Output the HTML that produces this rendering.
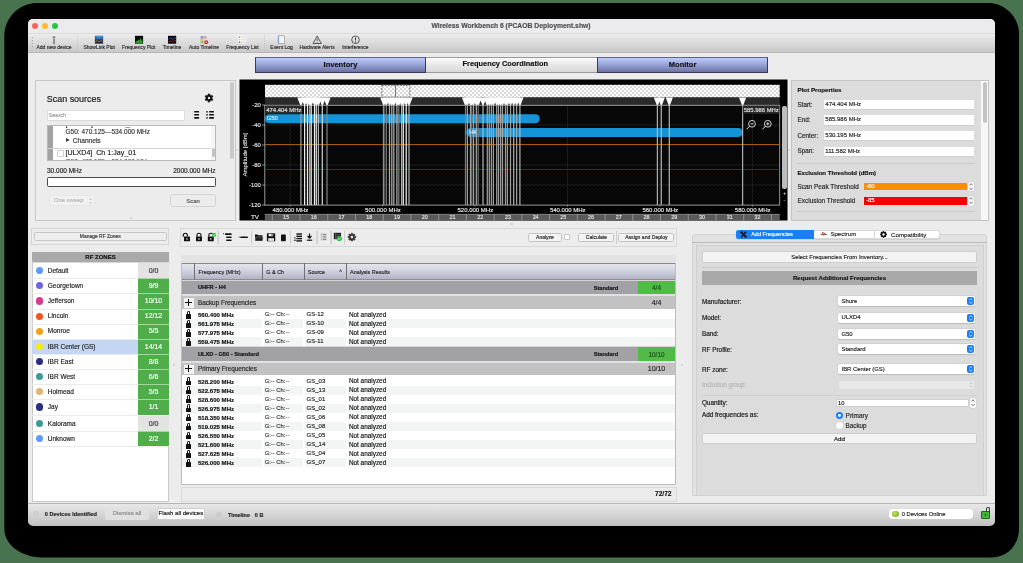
<!DOCTYPE html><html><head><meta charset="utf-8"><style>
html,body{margin:0;padding:0;}
body{width:1023px;height:563px;position:relative;overflow:hidden;background:#48734e;font-family:'Liberation Sans', sans-serif;}
div{box-sizing:border-box;}
.t{position:absolute;white-space:nowrap;-webkit-text-stroke:0.15px currentColor;}
svg{position:absolute;}
#w{position:absolute;left:0;top:0;width:1023px;height:563px;will-change:transform;}
</style></head><body><div id="w">
<svg style="position:absolute;left:0;top:0" width="1023" height="563"><path d="M37,3.0 L988,3.0 C1005,3.0 1019,17 1019,34 L1019,528 C1019,545 1008,557.6 990,557.6 L44,557.6 C22,557.6 4.3,546 4.3,528 L4.3,36 C4.3,18 19,3.0 37,3.0 Z" fill="#000"/></svg>
<div style="position:absolute;left:28px;top:19px;width:967px;height:506px;background:#ececec;border-radius:5px;overflow:hidden;"></div>
<div style="position:absolute;left:28px;top:19px;width:967px;height:15px;background:#ebebed;border-radius:5px 5px 0 0;border-bottom:1px solid #dadada;"></div>
<div style="position:absolute;left:32.15px;top:23.150000000000002px;width:6.3px;height:6.3px;background:#fe5f57;border-radius:50%;"></div>
<div style="position:absolute;left:42.050000000000004px;top:23.150000000000002px;width:6.3px;height:6.3px;background:#febc2e;border-radius:50%;"></div>
<div style="position:absolute;left:52.050000000000004px;top:23.150000000000002px;width:6.3px;height:6.3px;background:#28c840;border-radius:50%;"></div>
<div class="t" style="left:311px;width:400px;text-align:center;top:21.92px;font-size:6.8px;line-height:8.16px;color:#4d4d4d;font-weight:bold;">Wireless Workbench 6 (PCAOB Deployment.shw)</div>
<div style="position:absolute;left:28px;top:34px;width:967px;height:18.6px;background:linear-gradient(#ededed,#dcdcdc 45%,#c8c8c8);border-bottom:1px solid #b8b8b8;"></div>
<div style="position:absolute;left:255px;top:57px;width:171px;height:16px;background:linear-gradient(#bccbfa,#9aa5d8 45%,#6c73a3);border:1px solid #3a3a58;border-top-color:#5c6488;"></div>
<div style="position:absolute;left:426px;top:57px;width:171px;height:16px;background:linear-gradient(#fdfdfd,#e6e6e6 50%,#d8d8d8);border-top:1px solid #999;border-bottom:1px solid #999;"></div>
<div style="position:absolute;left:597px;top:57px;width:171px;height:16px;background:linear-gradient(#bccbfa,#9aa5d8 45%,#6c73a3);border:1px solid #3a3a58;border-top-color:#5c6488;"></div>
<div class="t" style="left:140.5px;width:400px;text-align:center;top:59.90px;font-size:7.5px;line-height:9.00px;color:#111;font-weight:bold;">Inventory</div>
<div class="t" style="left:305.3px;width:400px;text-align:center;top:59.96px;font-size:7.4px;line-height:8.88px;color:#111;font-weight:bold;">Frequency Coordination</div>
<div class="t" style="left:482.6px;width:400px;text-align:center;top:59.90px;font-size:7.5px;line-height:9.00px;color:#111;font-weight:bold;">Monitor</div>
<div style="position:absolute;left:34.5px;top:79.5px;width:201px;height:141px;background:#ececec;border:1px solid #c8c8c8;"></div>
<div class="t" style="left:46.8px;top:93.53px;font-size:8.95px;line-height:10.74px;color:#151515;font-weight:normal;">Scan sources</div>
<div style="position:absolute;left:229.5px;top:81.5px;width:4px;height:77px;background:#c9c9c9;border-radius:2px;"></div>
<div style="position:absolute;left:47px;top:110px;width:138px;height:10.5px;background:#fff;border:1px solid #dcdcdc;border-radius:1px;"></div>
<div class="t" style="left:48.5px;top:111.94px;font-size:5.6px;line-height:6.72px;color:#9a9a9a;font-weight:normal;">Search</div>
<div style="position:absolute;left:47px;top:125px;width:168.5px;height:35.5px;background:#fff;border:1px solid #b9b9b9;overflow:hidden;"><div style="position:absolute;left:-0.5px;top:0;width:5.5px;height:35px;background:#a3a3a3;"></div><div style="position:absolute;left:0px;top:21.8px;width:163px;height:0.8px;background:#d4d4d4;"></div><div style="position:absolute;left:163px;top:0;width:5.5px;height:35px;background:#f6f6f6;"></div><div style="position:absolute;left:164.2px;top:21.5px;width:3px;height:9px;background:#c4c4c4;border-radius:1.5px;"></div><div class="t" style="left:17.50px;top:-5.66px;font-size:7.1px;line-height:8.52px;color:#333;">[UHFR4]&nbsp; Ch 1:IBR_C</div><div class="t" style="left:17.50px;top:1.70px;font-size:6.5px;line-height:7.80px;color:#333;">G50: 470.125&mdash;534.000 MHz</div><div class="t" style="left:24.80px;top:10.64px;font-size:6.6px;line-height:7.92px;color:#333;">Channels</div><svg style="position:absolute;left:18px;top:12.4px" width="5" height="5"><polygon points="0,0 3.8,1.9 0,3.8" fill="#333"/></svg><div style="position:absolute;left:8.5px;top:24px;width:7px;height:7px;background:#fff;border:0.7px solid #d0d0d0;border-radius:1px;"></div><div class="t" style="left:17.50px;top:23.34px;font-size:7.1px;line-height:8.52px;color:#222;">[ULXD4]&nbsp; Ch 1:Jay_01</div><div class="t" style="left:17.50px;top:32.30px;font-size:6.5px;line-height:7.80px;color:#555;">G50: 470.125&mdash;534.000 MHz</div></div>
<div class="t" style="left:47px;top:167.10px;font-size:6.5px;line-height:7.80px;color:#222;font-weight:normal;">30.000 MHz</div>
<div class="t" style="left:-184.5px;width:400px;text-align:right;top:167.10px;font-size:6.5px;line-height:7.80px;color:#222;font-weight:normal;">2000.000 MHz</div>
<div style="position:absolute;left:47.3px;top:177.3px;width:168.3px;height:9.3px;background:#fff;border:1px solid #4a4a4a;border-radius:1.5px;"></div>
<div style="position:absolute;left:49.7px;top:195.7px;width:44.5px;height:9.7px;background:#f1f1f1;border-radius:2px;box-shadow:0 0 0 0.5px #e0e0e0;"></div>
<div class="t" style="left:53.8px;top:197.46px;font-size:5.9px;line-height:7.08px;color:#b8b8b8;font-weight:normal;">One sweep</div>
<svg style="left:87.6px;top:196.5px" width="5" height="8" viewBox="0 0 5 8"><path d="M1.2,3 L2.5,1.6 L3.8,3 M1.2,5 L2.5,6.4 L3.8,5" stroke="#b0b0b0" stroke-width="0.7" fill="none"/></svg>
<div style="position:absolute;left:170.3px;top:194.3px;width:45.4px;height:13.2px;background:#ececec;border:1px solid #d2d2d2;border-radius:2.5px;"></div>
<div class="t" style="left:-7px;width:400px;text-align:center;top:197.50px;font-size:6.0px;line-height:7.20px;color:#555;font-weight:normal;">Scan</div>
<div style="position:absolute;left:129.5px;top:216.8px;width:2px;height:2px;background:#cfcfcf;border-radius:50%;"></div>
<svg style="left:0;top:0" width="1023" height="563" viewBox="0 0 1023 563">
<defs><pattern id="chk" x="265" y="85" width="4" height="4" patternUnits="userSpaceOnUse"><rect width="4" height="4" fill="#fbfbfb"/><path d="M0,0 L4,4 M4,0 L0,4" stroke="#cdcdcd" stroke-width="0.75"/></pattern><pattern id="dchk" width="4" height="4" patternUnits="userSpaceOnUse"><rect width="4" height="4" fill="#030303"/><path d="M0,0 L4,4 M4,0 L0,4" stroke="#101010" stroke-width="0.6"/></pattern></defs>
<rect x="239.5" y="79.5" width="548" height="141" fill="#000"/>
<rect x="264.8" y="105" width="515" height="100" fill="url(#dchk)"/>
<rect x="265" y="84.8" width="514.7" height="12.7" fill="url(#chk)"/>
<rect x="265" y="97.5" width="514.7" height="7.8" fill="#2b2b2b"/>
<line x1="290.16" y1="105" x2="290.16" y2="205" stroke="#262626" stroke-width="0.7"/>
<line x1="382.60" y1="105" x2="382.60" y2="205" stroke="#262626" stroke-width="0.7"/>
<line x1="475.04" y1="105" x2="475.04" y2="205" stroke="#262626" stroke-width="0.7"/>
<line x1="567.48" y1="105" x2="567.48" y2="205" stroke="#262626" stroke-width="0.7"/>
<line x1="659.92" y1="105" x2="659.92" y2="205" stroke="#262626" stroke-width="0.7"/>
<line x1="752.36" y1="105" x2="752.36" y2="205" stroke="#262626" stroke-width="0.7"/>
<line x1="265" y1="125" x2="779.7" y2="125" stroke="#262626" stroke-width="0.7"/>
<line x1="265" y1="145" x2="779.7" y2="145" stroke="#262626" stroke-width="0.7"/>
<line x1="265" y1="165" x2="779.7" y2="165" stroke="#262626" stroke-width="0.7"/>
<line x1="265" y1="185" x2="779.7" y2="185" stroke="#262626" stroke-width="0.7"/>
<polygon points="297.30,97.4 304.50,97.4 301.50,105.3 300.30,105.3" fill="#fff"/>
<polygon points="301.00,97.4 308.20,97.4 305.20,105.3 304.00,105.3" fill="#fff"/>
<polygon points="303.90,97.4 311.10,97.4 308.10,105.3 306.90,105.3" fill="#fff"/>
<polygon points="306.10,97.4 313.30,97.4 310.30,105.3 309.10,105.3" fill="#fff"/>
<polygon points="307.60,97.4 314.80,97.4 311.80,105.3 310.60,105.3" fill="#fff"/>
<polygon points="310.90,97.4 318.10,97.4 315.10,105.3 313.90,105.3" fill="#fff"/>
<polygon points="312.70,97.4 319.90,97.4 316.90,105.3 315.70,105.3" fill="#fff"/>
<polygon points="314.80,97.4 322.00,97.4 319.00,105.3 317.80,105.3" fill="#fff"/>
<polygon points="318.70,97.4 325.90,97.4 322.90,105.3 321.70,105.3" fill="#fff"/>
<polygon points="323.40,97.4 330.60,97.4 327.60,105.3 326.40,105.3" fill="#fff"/>
<polygon points="380.20,97.4 387.40,97.4 384.40,105.3 383.20,105.3" fill="#fff"/>
<polygon points="382.70,97.4 389.90,97.4 386.90,105.3 385.70,105.3" fill="#fff"/>
<polygon points="385.90,97.4 393.10,97.4 390.10,105.3 388.90,105.3" fill="#fff"/>
<polygon points="388.20,97.4 395.40,97.4 392.40,105.3 391.20,105.3" fill="#fff"/>
<polygon points="390.20,97.4 397.40,97.4 394.40,105.3 393.20,105.3" fill="#fff"/>
<polygon points="393.30,97.4 400.50,97.4 397.50,105.3 396.30,105.3" fill="#fff"/>
<polygon points="395.20,97.4 402.40,97.4 399.40,105.3 398.20,105.3" fill="#fff"/>
<polygon points="398.00,97.4 405.20,97.4 402.20,105.3 401.00,105.3" fill="#fff"/>
<polygon points="399.70,97.4 406.90,97.4 403.90,105.3 402.70,105.3" fill="#fff"/>
<polygon points="402.60,97.4 409.80,97.4 406.80,105.3 405.60,105.3" fill="#fff"/>
<polygon points="405.40,97.4 412.60,97.4 409.60,105.3 408.40,105.3" fill="#fff"/>
<polygon points="461.90,97.4 469.10,97.4 466.10,105.3 464.90,105.3" fill="#fff"/>
<polygon points="463.80,97.4 471.00,97.4 468.00,105.3 466.80,105.3" fill="#fff"/>
<polygon points="466.90,97.4 474.10,97.4 471.10,105.3 469.90,105.3" fill="#fff"/>
<polygon points="468.10,97.4 475.30,97.4 472.30,105.3 471.10,105.3" fill="#fff"/>
<polygon points="469.90,97.4 477.10,97.4 474.10,105.3 472.90,105.3" fill="#fff"/>
<polygon points="472.80,97.4 480.00,97.4 477.00,105.3 475.80,105.3" fill="#fff"/>
<polygon points="474.60,97.4 481.80,97.4 478.80,105.3 477.60,105.3" fill="#fff"/>
<polygon points="479.40,97.4 486.60,97.4 483.60,105.3 482.40,105.3" fill="#fff"/>
<polygon points="483.70,97.4 490.90,97.4 487.90,105.3 486.70,105.3" fill="#fff"/>
<polygon points="485.70,97.4 492.90,97.4 489.90,105.3 488.70,105.3" fill="#fff"/>
<polygon points="487.80,97.4 495.00,97.4 492.00,105.3 490.80,105.3" fill="#fff"/>
<polygon points="489.80,97.4 497.00,97.4 494.00,105.3 492.80,105.3" fill="#fff"/>
<polygon points="493.10,97.4 500.30,97.4 497.30,105.3 496.10,105.3" fill="#fff"/>
<polygon points="494.90,97.4 502.10,97.4 499.10,105.3 497.90,105.3" fill="#fff"/>
<polygon points="497.00,97.4 504.20,97.4 501.20,105.3 500.00,105.3" fill="#fff"/>
<polygon points="498.90,97.4 506.10,97.4 503.10,105.3 501.90,105.3" fill="#fff"/>
<polygon points="501.90,97.4 509.10,97.4 506.10,105.3 504.90,105.3" fill="#fff"/>
<polygon points="503.80,97.4 511.00,97.4 508.00,105.3 506.80,105.3" fill="#fff"/>
<polygon points="506.90,97.4 514.10,97.4 511.10,105.3 509.90,105.3" fill="#fff"/>
<polygon points="510.10,97.4 517.30,97.4 514.30,105.3 513.10,105.3" fill="#fff"/>
<polygon points="513.00,97.4 520.20,97.4 517.20,105.3 516.00,105.3" fill="#fff"/>
<polygon points="516.30,97.4 523.50,97.4 520.50,105.3 519.30,105.3" fill="#fff"/>
<polygon points="653.80,97.4 661.00,97.4 658.00,105.3 656.80,105.3" fill="#fff"/>
<polygon points="657.70,97.4 664.90,97.4 661.90,105.3 660.70,105.3" fill="#fff"/>
<polygon points="665.70,97.4 672.90,97.4 669.90,105.3 668.70,105.3" fill="#fff"/>
<polygon points="739.00,97.4 746.20,97.4 743.20,105.3 742.00,105.3" fill="#fff"/>
<rect x="264.8" y="105.3" width="514.9" height="99.8" fill="none" stroke="#a8a8a8" stroke-width="0.9"/>
<rect x="264.8" y="114.3" width="275" height="8.9" rx="4.4" fill="#1494d8"/>
<rect x="466.3" y="128" width="276.3" height="9" rx="4.5" fill="#1494d8"/>
<line x1="265" y1="144.5" x2="779.5" y2="144.5" stroke="#a05c0c" stroke-width="1.1"/>
<line x1="265" y1="169.5" x2="779.5" y2="169.5" stroke="#950606" stroke-width="1.1"/>
<line x1="300.9" y1="105" x2="300.9" y2="205" stroke="#aaa" stroke-width="1.25" opacity="0.92"/>
<line x1="304.6" y1="105" x2="304.6" y2="205" stroke="#fff" stroke-width="1.25" opacity="0.92"/>
<line x1="307.5" y1="105" x2="307.5" y2="205" stroke="#fff" stroke-width="1.25" opacity="0.92"/>
<line x1="309.7" y1="105" x2="309.7" y2="205" stroke="#bbb" stroke-width="1.25" opacity="0.92"/>
<line x1="311.2" y1="105" x2="311.2" y2="205" stroke="#fff" stroke-width="1.25" opacity="0.92"/>
<line x1="314.5" y1="105" x2="314.5" y2="205" stroke="#fff" stroke-width="1.25" opacity="0.92"/>
<line x1="316.3" y1="105" x2="316.3" y2="205" stroke="#eee" stroke-width="1.25" opacity="0.92"/>
<line x1="318.4" y1="105" x2="318.4" y2="205" stroke="#bbb" stroke-width="1.25" opacity="0.92"/>
<line x1="322.3" y1="105" x2="322.3" y2="205" stroke="#ddd" stroke-width="1.25" opacity="0.92"/>
<line x1="327" y1="105" x2="327" y2="205" stroke="#888" stroke-width="1.25" opacity="0.92"/>
<line x1="383.8" y1="105" x2="383.8" y2="205" stroke="#bbb" stroke-width="1.25" opacity="0.92"/>
<line x1="386.3" y1="105" x2="386.3" y2="205" stroke="#888" stroke-width="1.25" opacity="0.92"/>
<line x1="389.5" y1="105" x2="389.5" y2="205" stroke="#bbb" stroke-width="1.25" opacity="0.92"/>
<line x1="391.8" y1="105" x2="391.8" y2="205" stroke="#bbb" stroke-width="1.25" opacity="0.92"/>
<line x1="393.8" y1="105" x2="393.8" y2="205" stroke="#bbb" stroke-width="1.25" opacity="0.92"/>
<line x1="396.9" y1="105" x2="396.9" y2="205" stroke="#bbb" stroke-width="1.25" opacity="0.92"/>
<line x1="398.8" y1="105" x2="398.8" y2="205" stroke="#888" stroke-width="1.25" opacity="0.92"/>
<line x1="401.6" y1="105" x2="401.6" y2="205" stroke="#bbb" stroke-width="1.25" opacity="0.92"/>
<line x1="403.3" y1="105" x2="403.3" y2="205" stroke="#fff" stroke-width="1.25" opacity="0.92"/>
<line x1="406.2" y1="105" x2="406.2" y2="205" stroke="#fff" stroke-width="1.25" opacity="0.92"/>
<line x1="409" y1="105" x2="409" y2="205" stroke="#bbb" stroke-width="1.25" opacity="0.92"/>
<line x1="465.5" y1="105" x2="465.5" y2="205" stroke="#888" stroke-width="1.25" opacity="0.92"/>
<line x1="467.4" y1="105" x2="467.4" y2="205" stroke="#aaa" stroke-width="1.25" opacity="0.92"/>
<line x1="470.5" y1="105" x2="470.5" y2="205" stroke="#aaa" stroke-width="1.25" opacity="0.92"/>
<line x1="471.7" y1="105" x2="471.7" y2="205" stroke="#777" stroke-width="1.25" opacity="0.92"/>
<line x1="473.5" y1="105" x2="473.5" y2="205" stroke="#aaa" stroke-width="1.25" opacity="0.92"/>
<line x1="476.4" y1="105" x2="476.4" y2="205" stroke="#aaa" stroke-width="1.25" opacity="0.92"/>
<line x1="478.2" y1="105" x2="478.2" y2="205" stroke="#777" stroke-width="1.25" opacity="0.92"/>
<line x1="483" y1="105" x2="483" y2="205" stroke="#bbb" stroke-width="1.25" opacity="0.92"/>
<line x1="487.3" y1="105" x2="487.3" y2="205" stroke="#aaa" stroke-width="1.25" opacity="0.92"/>
<line x1="489.3" y1="105" x2="489.3" y2="205" stroke="#aaa" stroke-width="1.25" opacity="0.92"/>
<line x1="491.4" y1="105" x2="491.4" y2="205" stroke="#aaa" stroke-width="1.25" opacity="0.92"/>
<line x1="493.4" y1="105" x2="493.4" y2="205" stroke="#aaa" stroke-width="1.25" opacity="0.92"/>
<line x1="496.7" y1="105" x2="496.7" y2="205" stroke="#aaa" stroke-width="1.25" opacity="0.92"/>
<line x1="498.5" y1="105" x2="498.5" y2="205" stroke="#aaa" stroke-width="1.25" opacity="0.92"/>
<line x1="500.6" y1="105" x2="500.6" y2="205" stroke="#aaa" stroke-width="1.25" opacity="0.92"/>
<line x1="502.5" y1="105" x2="502.5" y2="205" stroke="#aaa" stroke-width="1.25" opacity="0.92"/>
<line x1="505.5" y1="105" x2="505.5" y2="205" stroke="#aaa" stroke-width="1.25" opacity="0.92"/>
<line x1="507.4" y1="105" x2="507.4" y2="205" stroke="#aaa" stroke-width="1.25" opacity="0.92"/>
<line x1="510.5" y1="105" x2="510.5" y2="205" stroke="#aaa" stroke-width="1.25" opacity="0.92"/>
<line x1="513.7" y1="105" x2="513.7" y2="205" stroke="#bbb" stroke-width="1.25" opacity="0.92"/>
<line x1="516.6" y1="105" x2="516.6" y2="205" stroke="#aaa" stroke-width="1.25" opacity="0.92"/>
<line x1="519.9" y1="105" x2="519.9" y2="205" stroke="#bbb" stroke-width="1.25" opacity="0.92"/>
<line x1="657.4" y1="105" x2="657.4" y2="205" stroke="#bbb" stroke-width="1.25" opacity="0.92"/>
<line x1="661.3" y1="105" x2="661.3" y2="205" stroke="#bbb" stroke-width="1.25" opacity="0.92"/>
<line x1="669.3" y1="105" x2="669.3" y2="205" stroke="#bbb" stroke-width="1.25" opacity="0.92"/>
<line x1="742.6" y1="105" x2="742.6" y2="205" stroke="#bbb" stroke-width="1.25" opacity="0.92"/>
<rect x="265.3" y="105.8" width="36" height="8" fill="#2a2a2a"/>
<rect x="742.8" y="105.8" width="36.5" height="8" fill="#2a2a2a"/>
<rect x="381.8" y="85.3" width="28" height="11.8" fill="none" stroke="#555" stroke-width="0.8" stroke-dasharray="2 1"/>
<line x1="395.6" y1="85.3" x2="395.6" y2="97" stroke="#555" stroke-width="0.8"/>
<line x1="262" y1="105" x2="265" y2="105" stroke="#aaa" stroke-width="0.8"/>
<line x1="262" y1="125" x2="265" y2="125" stroke="#aaa" stroke-width="0.8"/>
<line x1="262" y1="145" x2="265" y2="145" stroke="#aaa" stroke-width="0.8"/>
<line x1="262" y1="165" x2="265" y2="165" stroke="#aaa" stroke-width="0.8"/>
<line x1="262" y1="185" x2="265" y2="185" stroke="#aaa" stroke-width="0.8"/>
<line x1="262" y1="205" x2="265" y2="205" stroke="#aaa" stroke-width="0.8"/>
<rect x="264.8" y="214" width="515" height="6.5" fill="#5a5a5a"/>
<line x1="264.8" y1="214.3" x2="779.7" y2="214.3" stroke="#9a9a9a" stroke-width="0.6"/>
<line x1="272.28" y1="214" x2="272.28" y2="220.5" stroke="#a8a8a8" stroke-width="0.7"/>
<line x1="300.01" y1="214" x2="300.01" y2="220.5" stroke="#a8a8a8" stroke-width="0.7"/>
<line x1="327.74" y1="214" x2="327.74" y2="220.5" stroke="#a8a8a8" stroke-width="0.7"/>
<line x1="355.47" y1="214" x2="355.47" y2="220.5" stroke="#a8a8a8" stroke-width="0.7"/>
<line x1="383.20" y1="214" x2="383.20" y2="220.5" stroke="#a8a8a8" stroke-width="0.7"/>
<line x1="410.94" y1="214" x2="410.94" y2="220.5" stroke="#a8a8a8" stroke-width="0.7"/>
<line x1="438.67" y1="214" x2="438.67" y2="220.5" stroke="#a8a8a8" stroke-width="0.7"/>
<line x1="466.40" y1="214" x2="466.40" y2="220.5" stroke="#a8a8a8" stroke-width="0.7"/>
<line x1="494.13" y1="214" x2="494.13" y2="220.5" stroke="#a8a8a8" stroke-width="0.7"/>
<line x1="521.86" y1="214" x2="521.86" y2="220.5" stroke="#a8a8a8" stroke-width="0.7"/>
<line x1="549.60" y1="214" x2="549.60" y2="220.5" stroke="#a8a8a8" stroke-width="0.7"/>
<line x1="577.33" y1="214" x2="577.33" y2="220.5" stroke="#a8a8a8" stroke-width="0.7"/>
<line x1="605.06" y1="214" x2="605.06" y2="220.5" stroke="#a8a8a8" stroke-width="0.7"/>
<line x1="632.79" y1="214" x2="632.79" y2="220.5" stroke="#a8a8a8" stroke-width="0.7"/>
<line x1="660.52" y1="214" x2="660.52" y2="220.5" stroke="#a8a8a8" stroke-width="0.7"/>
<line x1="688.26" y1="214" x2="688.26" y2="220.5" stroke="#a8a8a8" stroke-width="0.7"/>
<line x1="715.99" y1="214" x2="715.99" y2="220.5" stroke="#a8a8a8" stroke-width="0.7"/>
<line x1="743.72" y1="214" x2="743.72" y2="220.5" stroke="#a8a8a8" stroke-width="0.7"/>
<line x1="771.45" y1="214" x2="771.45" y2="220.5" stroke="#a8a8a8" stroke-width="0.7"/>
<line x1="290.16" y1="205" x2="290.16" y2="206.6" stroke="#aaa" stroke-width="0.7"/>
<line x1="382.60" y1="205" x2="382.60" y2="206.6" stroke="#aaa" stroke-width="0.7"/>
<line x1="475.04" y1="205" x2="475.04" y2="206.6" stroke="#aaa" stroke-width="0.7"/>
<line x1="567.48" y1="205" x2="567.48" y2="206.6" stroke="#aaa" stroke-width="0.7"/>
<line x1="659.92" y1="205" x2="659.92" y2="206.6" stroke="#aaa" stroke-width="0.7"/>
<line x1="752.36" y1="205" x2="752.36" y2="206.6" stroke="#aaa" stroke-width="0.7"/>
<rect x="782" y="106" width="5" height="83" rx="2" fill="#bdbdbd"/>
<circle cx="752.0" cy="123.8" r="3.4" fill="none" stroke="#e6e6e6" stroke-width="0.9"/>
<line x1="749.6" y1="126.2" x2="746.6" y2="129.3" stroke="#e6e6e6" stroke-width="1"/>
<line x1="750.4" y1="123.8" x2="753.6" y2="123.8" stroke="#e6e6e6" stroke-width="0.9"/>
<circle cx="767.8" cy="123.8" r="3.4" fill="none" stroke="#e6e6e6" stroke-width="0.9"/>
<line x1="765.4" y1="126.2" x2="762.4" y2="129.3" stroke="#e6e6e6" stroke-width="1"/>
<line x1="766.1999999999999" y1="123.8" x2="769.4" y2="123.8" stroke="#e6e6e6" stroke-width="0.9"/>
<line x1="767.8" y1="122.2" x2="767.8" y2="125.4" stroke="#e6e6e6" stroke-width="0.9"/>
</svg>
<div class="t" style="left:160.80px;width:100px;text-align:right;top:101.86px;font-size:5.9px;line-height:7.08px;color:#e4e4e4;">-20</div>
<div class="t" style="left:160.80px;width:100px;text-align:right;top:121.86px;font-size:5.9px;line-height:7.08px;color:#e4e4e4;">-40</div>
<div class="t" style="left:160.80px;width:100px;text-align:right;top:141.86px;font-size:5.9px;line-height:7.08px;color:#e4e4e4;">-60</div>
<div class="t" style="left:160.80px;width:100px;text-align:right;top:161.86px;font-size:5.9px;line-height:7.08px;color:#e4e4e4;">-80</div>
<div class="t" style="left:160.80px;width:100px;text-align:right;top:181.86px;font-size:5.9px;line-height:7.08px;color:#e4e4e4;">-100</div>
<div class="t" style="left:160.80px;width:100px;text-align:right;top:201.86px;font-size:5.9px;line-height:7.08px;color:#e4e4e4;">-120</div>
<div class="t" style="left:206.1px;top:151.4px;width:80px;text-align:center;font-size:6px;line-height:7.2px;color:#d8d8d8;transform:rotate(-90deg);">Amplitude [dBm]</div>
<div class="t" style="left:190.46px;width:200px;text-align:center;top:206.70px;font-size:6.0px;line-height:7.20px;color:#eaeaea;">480.000 MHz</div>
<div class="t" style="left:282.90px;width:200px;text-align:center;top:206.70px;font-size:6.0px;line-height:7.20px;color:#eaeaea;">500.000 MHz</div>
<div class="t" style="left:375.34px;width:200px;text-align:center;top:206.70px;font-size:6.0px;line-height:7.20px;color:#eaeaea;">520.000 MHz</div>
<div class="t" style="left:467.78px;width:200px;text-align:center;top:206.70px;font-size:6.0px;line-height:7.20px;color:#eaeaea;">540.000 MHz</div>
<div class="t" style="left:560.22px;width:200px;text-align:center;top:206.70px;font-size:6.0px;line-height:7.20px;color:#eaeaea;">560.000 MHz</div>
<div class="t" style="left:652.66px;width:200px;text-align:center;top:206.70px;font-size:6.0px;line-height:7.20px;color:#eaeaea;">580.000 MHz</div>
<div class="t" style="left:155.00px;width:200px;text-align:center;top:213.28px;font-size:6.2px;line-height:7.44px;color:#eaeaea;">TV</div>
<div class="t" style="left:186.04px;width:200px;text-align:center;top:214.36px;font-size:5.4px;line-height:6.48px;color:#e4e4e4;">15</div>
<div class="t" style="left:213.77px;width:200px;text-align:center;top:214.36px;font-size:5.4px;line-height:6.48px;color:#e4e4e4;">16</div>
<div class="t" style="left:241.51px;width:200px;text-align:center;top:214.36px;font-size:5.4px;line-height:6.48px;color:#e4e4e4;">17</div>
<div class="t" style="left:269.24px;width:200px;text-align:center;top:214.36px;font-size:5.4px;line-height:6.48px;color:#e4e4e4;">18</div>
<div class="t" style="left:296.97px;width:200px;text-align:center;top:214.36px;font-size:5.4px;line-height:6.48px;color:#e4e4e4;">19</div>
<div class="t" style="left:324.70px;width:200px;text-align:center;top:214.36px;font-size:5.4px;line-height:6.48px;color:#e4e4e4;">20</div>
<div class="t" style="left:352.43px;width:200px;text-align:center;top:214.36px;font-size:5.4px;line-height:6.48px;color:#e4e4e4;">21</div>
<div class="t" style="left:380.17px;width:200px;text-align:center;top:214.36px;font-size:5.4px;line-height:6.48px;color:#e4e4e4;">22</div>
<div class="t" style="left:407.90px;width:200px;text-align:center;top:214.36px;font-size:5.4px;line-height:6.48px;color:#e4e4e4;">23</div>
<div class="t" style="left:435.63px;width:200px;text-align:center;top:214.36px;font-size:5.4px;line-height:6.48px;color:#e4e4e4;">24</div>
<div class="t" style="left:463.36px;width:200px;text-align:center;top:214.36px;font-size:5.4px;line-height:6.48px;color:#e4e4e4;">25</div>
<div class="t" style="left:491.09px;width:200px;text-align:center;top:214.36px;font-size:5.4px;line-height:6.48px;color:#e4e4e4;">26</div>
<div class="t" style="left:518.83px;width:200px;text-align:center;top:214.36px;font-size:5.4px;line-height:6.48px;color:#e4e4e4;">27</div>
<div class="t" style="left:546.56px;width:200px;text-align:center;top:214.36px;font-size:5.4px;line-height:6.48px;color:#e4e4e4;">28</div>
<div class="t" style="left:574.29px;width:200px;text-align:center;top:214.36px;font-size:5.4px;line-height:6.48px;color:#e4e4e4;">29</div>
<div class="t" style="left:602.02px;width:200px;text-align:center;top:214.36px;font-size:5.4px;line-height:6.48px;color:#e4e4e4;">30</div>
<div class="t" style="left:629.75px;width:200px;text-align:center;top:214.36px;font-size:5.4px;line-height:6.48px;color:#e4e4e4;">31</div>
<div class="t" style="left:657.49px;width:200px;text-align:center;top:214.36px;font-size:5.4px;line-height:6.48px;color:#e4e4e4;">32</div>
<div class="t" style="left:266.3px;top:106.96px;font-size:5.9px;line-height:7.08px;color:#e0e0e0;">474.404 MHz</div>
<div class="t" style="left:678.80px;width:100px;text-align:right;top:106.96px;font-size:5.9px;line-height:7.08px;color:#e0e0e0;">585.986 MHz</div>
<div class="t" style="left:266.8px;top:115.22px;font-size:5.8px;line-height:6.96px;color:#d8ecff;">G50</div>
<div class="t" style="left:469px;top:129.14px;font-size:5.6px;line-height:6.72px;color:#d8ecff;">H4</div>
<div class="t" style="left:684.50px;width:200px;text-align:center;top:190.10px;font-size:5.5px;line-height:6.60px;color:#ccc;">+</div>
<div class="t" style="left:684.50px;width:200px;text-align:center;top:197.40px;font-size:6px;line-height:7.20px;color:#ccc;">-</div>
<div style="position:absolute;left:791px;top:79.5px;width:198px;height:141px;background:#dcdcdc;border:1px solid #c4c4c4;overflow:hidden;"></div>
<div style="position:absolute;left:981.2px;top:80.5px;width:7px;height:139.5px;background:#f7f7f7;"></div>
<div style="position:absolute;left:982.5px;top:81.5px;width:4px;height:41px;background:#c4c4c4;border-radius:2px;"></div>
<div class="t" style="left:797.5px;top:85.98px;font-size:6.2px;line-height:7.44px;color:#111;font-weight:bold;">Plot Properties</div>
<div class="t" style="left:797.5px;top:100.57px;font-size:6.3px;line-height:7.56px;color:#222;font-weight:normal;">Start:</div>
<div style="position:absolute;left:823.6px;top:99.7px;width:150.6px;height:9.299999999999997px;background:#fff;box-shadow:0 0.6px 0 #c4c4c4;"></div>
<div class="t" style="left:825.3px;top:100.75px;font-size:6.0px;line-height:7.20px;color:#222;font-weight:normal;">474.404 MHz</div>
<div class="t" style="left:797.5px;top:116.22px;font-size:6.3px;line-height:7.56px;color:#222;font-weight:normal;">End:</div>
<div style="position:absolute;left:823.6px;top:115.3px;width:150.6px;height:9.400000000000006px;background:#fff;box-shadow:0 0.6px 0 #c4c4c4;"></div>
<div class="t" style="left:825.3px;top:116.40px;font-size:6.0px;line-height:7.20px;color:#222;font-weight:normal;">585.986 MHz</div>
<div class="t" style="left:797.5px;top:131.82px;font-size:6.3px;line-height:7.56px;color:#222;font-weight:normal;">Center:</div>
<div style="position:absolute;left:823.6px;top:130.9px;width:150.6px;height:9.400000000000006px;background:#fff;box-shadow:0 0.6px 0 #c4c4c4;"></div>
<div class="t" style="left:825.3px;top:132.00px;font-size:6.0px;line-height:7.20px;color:#222;font-weight:normal;">530.195 MHz</div>
<div class="t" style="left:797.5px;top:147.42px;font-size:6.3px;line-height:7.56px;color:#222;font-weight:normal;">Span:</div>
<div style="position:absolute;left:823.6px;top:146.5px;width:150.6px;height:9.400000000000006px;background:#fff;box-shadow:0 0.6px 0 #c4c4c4;"></div>
<div class="t" style="left:825.3px;top:147.60px;font-size:6.0px;line-height:7.20px;color:#222;font-weight:normal;">111.582 MHz</div>
<div style="position:absolute;left:797px;top:163px;width:178px;height:0.8px;background:#cacaca;"></div>
<div class="t" style="left:797.5px;top:169.97px;font-size:6.05px;line-height:7.26px;color:#111;font-weight:bold;">Exclusion Threshold (dBm)</div>
<div class="t" style="left:797.5px;top:182.53px;font-size:6.45px;line-height:7.74px;color:#222;font-weight:normal;">Scan Peak Threshold</div>
<div style="position:absolute;left:864.1px;top:182.6px;width:103px;height:7.8px;background:#f98f00;"></div>
<div class="t" style="left:866px;top:183.02px;font-size:5.8px;line-height:6.96px;color:#fff;font-weight:normal;">-60</div>
<div class="t" style="left:797.5px;top:197.13px;font-size:6.45px;line-height:7.74px;color:#222;font-weight:normal;">Exclusion Threshold</div>
<div style="position:absolute;left:864.1px;top:196.8px;width:103px;height:8px;background:#f70000;"></div>
<div class="t" style="left:866px;top:197.32px;font-size:5.8px;line-height:6.96px;color:#fff;font-weight:normal;">-85</div>
<div style="position:absolute;left:968.3px;top:182.0px;width:6px;height:9.2px;background:#fff;border-radius:2.5px;box-shadow:0 0 0 0.4px #c8c8c8;"></div>
<svg style="left:968.3px;top:182.00px" width="6" height="9.2" viewBox="0 0 6 9.2"><path d="M1.4,3.4 L3,1.6 L4.6,3.4 M1.4,5.8 L3,7.6 L4.6,5.8" stroke="#333" stroke-width="0.7" fill="none"/></svg>
<div style="position:absolute;left:968.3px;top:196.4px;width:6px;height:9.2px;background:#fff;border-radius:2.5px;box-shadow:0 0 0 0.4px #c8c8c8;"></div>
<svg style="left:968.3px;top:196.40px" width="6" height="9.2" viewBox="0 0 6 9.2"><path d="M1.4,3.4 L3,1.6 L4.6,3.4 M1.4,5.8 L3,7.6 L4.6,5.8" stroke="#333" stroke-width="0.7" fill="none"/></svg>
<div style="position:absolute;left:797px;top:211.3px;width:178px;height:0.8px;background:#cacaca;"></div>
<div style="position:absolute;left:791px;top:214px;width:190px;height:6px;overflow:hidden;"><div class="t" style="left:6.5px;top:3.5px;font-size:6.2px;line-height:7px;color:#333;font-weight:bold;">View Scan Settings Data</div></div>
<div style="position:absolute;left:31px;top:227.7px;width:138px;height:17px;border:1px solid #d6d6d6;"></div>
<div style="position:absolute;left:33.7px;top:232.4px;width:133.2px;height:8.3px;background:#eeeeee;border:1px solid #c6c6c6;border-radius:1.5px;"></div>
<div class="t" style="left:-99.70px;width:400px;text-align:center;top:233.63px;font-size:4.95px;line-height:5.94px;color:#333;font-weight:normal;">Manage RF Zones</div>
<div style="position:absolute;left:31.7px;top:252.2px;width:137.5px;height:10px;background:#a9a9a9;"></div>
<div class="t" style="left:-99.50px;width:400px;text-align:center;top:253.60px;font-size:6.0px;line-height:7.20px;color:#111;font-weight:bold;">RF ZONES</div>
<div style="position:absolute;left:31.7px;top:262px;width:137.5px;height:239.5px;background:#fff;border:1px solid #c9c9c9;border-top:none;"></div>
<div style="position:absolute;left:31.7px;top:262px;width:137.5px;height:1.4px;background:#d6d6d6;"></div>
<div style="position:absolute;left:137.9px;top:263.4px;width:31.3px;height:14.950000000000045px;background:#e3e3e3;"></div>
<div style="position:absolute;left:35.6px;top:267.2px;width:7.2px;height:7.2px;background:#5a9cf8;border-radius:50%;"></div>
<div class="t" style="left:47.8px;top:266.90px;font-size:6.5px;line-height:7.80px;color:#222;font-weight:normal;">Default</div>
<div class="t" style="left:-46.50px;width:400px;text-align:center;top:267.10px;font-size:7.0px;line-height:8.40px;color:#333;font-weight:normal;">0/0</div>
<div style="position:absolute;left:137.9px;top:278.35px;width:31.3px;height:15.099999999999966px;background:#4fad4a;"></div>
<div style="position:absolute;left:137.9px;top:278.35px;width:31.3px;height:0.8px;background:#a6d6a0;"></div>
<div style="position:absolute;left:32.2px;top:278.35px;width:105.7px;height:0.7px;background:#ebebeb;"></div>
<div style="position:absolute;left:35.6px;top:282.29999999999995px;width:7.2px;height:7.2px;background:#7064e6;border-radius:50%;"></div>
<div class="t" style="left:47.8px;top:282.00px;font-size:6.5px;line-height:7.80px;color:#222;font-weight:normal;">Georgetown</div>
<div class="t" style="left:-46.50px;width:400px;text-align:center;top:282.20px;font-size:7.0px;line-height:8.40px;color:#fff;font-weight:normal;">9/9</div>
<div style="position:absolute;left:137.9px;top:293.45px;width:31.3px;height:15.100000000000023px;background:#4fad4a;"></div>
<div style="position:absolute;left:137.9px;top:293.45px;width:31.3px;height:0.8px;background:#a6d6a0;"></div>
<div style="position:absolute;left:32.2px;top:293.45px;width:105.7px;height:0.7px;background:#ebebeb;"></div>
<div style="position:absolute;left:35.6px;top:297.4px;width:7.2px;height:7.2px;background:#d8398e;border-radius:50%;"></div>
<div class="t" style="left:47.8px;top:297.10px;font-size:6.5px;line-height:7.80px;color:#222;font-weight:normal;">Jefferson</div>
<div class="t" style="left:-46.50px;width:400px;text-align:center;top:297.30px;font-size:7.0px;line-height:8.40px;color:#fff;font-weight:normal;">10/10</div>
<div style="position:absolute;left:137.9px;top:308.55px;width:31.3px;height:15.050000000000011px;background:#4fad4a;"></div>
<div style="position:absolute;left:137.9px;top:308.55px;width:31.3px;height:0.8px;background:#a6d6a0;"></div>
<div style="position:absolute;left:32.2px;top:308.55px;width:105.7px;height:0.7px;background:#ebebeb;"></div>
<div style="position:absolute;left:35.6px;top:312.5px;width:7.2px;height:7.2px;background:#f0561c;border-radius:50%;"></div>
<div class="t" style="left:47.8px;top:312.20px;font-size:6.5px;line-height:7.80px;color:#222;font-weight:normal;">Lincoln</div>
<div class="t" style="left:-46.50px;width:400px;text-align:center;top:312.40px;font-size:7.0px;line-height:8.40px;color:#fff;font-weight:normal;">12/12</div>
<div style="position:absolute;left:137.9px;top:323.6px;width:31.3px;height:15.149999999999977px;background:#4fad4a;"></div>
<div style="position:absolute;left:137.9px;top:323.6px;width:31.3px;height:0.8px;background:#a6d6a0;"></div>
<div style="position:absolute;left:32.2px;top:323.6px;width:105.7px;height:0.7px;background:#ebebeb;"></div>
<div style="position:absolute;left:35.6px;top:327.5px;width:7.2px;height:7.2px;background:#f2a11c;border-radius:50%;"></div>
<div class="t" style="left:47.8px;top:327.20px;font-size:6.5px;line-height:7.80px;color:#222;font-weight:normal;">Monroe</div>
<div class="t" style="left:-46.50px;width:400px;text-align:center;top:327.40px;font-size:7.0px;line-height:8.40px;color:#fff;font-weight:normal;">5/5</div>
<div style="position:absolute;left:32.2px;top:338.75px;width:105.7px;height:15.199999999999989px;background:#c5d6f2;"></div>
<div style="position:absolute;left:137.9px;top:338.75px;width:31.3px;height:15.199999999999989px;background:#4fad4a;"></div>
<div style="position:absolute;left:137.9px;top:338.75px;width:31.3px;height:0.8px;background:#a6d6a0;"></div>
<div style="position:absolute;left:32.2px;top:338.75px;width:105.7px;height:0.7px;background:#ebebeb;"></div>
<div style="position:absolute;left:35.6px;top:342.79999999999995px;width:7.2px;height:7.2px;background:#f4ee00;border-radius:50%;"></div>
<div class="t" style="left:47.8px;top:342.50px;font-size:6.5px;line-height:7.80px;color:#222;font-weight:normal;">IBR Center (GS)</div>
<div class="t" style="left:-46.50px;width:400px;text-align:center;top:342.70px;font-size:7.0px;line-height:8.40px;color:#fff;font-weight:normal;">14/14</div>
<div style="position:absolute;left:137.9px;top:353.95px;width:31.3px;height:15.0px;background:#4fad4a;"></div>
<div style="position:absolute;left:137.9px;top:353.95px;width:31.3px;height:0.8px;background:#a6d6a0;"></div>
<div style="position:absolute;left:32.2px;top:353.95px;width:105.7px;height:0.7px;background:#ebebeb;"></div>
<div style="position:absolute;left:35.6px;top:357.9px;width:7.2px;height:7.2px;background:#2a2c86;border-radius:50%;"></div>
<div class="t" style="left:47.8px;top:357.60px;font-size:6.5px;line-height:7.80px;color:#222;font-weight:normal;">IBR East</div>
<div class="t" style="left:-46.50px;width:400px;text-align:center;top:357.80px;font-size:7.0px;line-height:8.40px;color:#fff;font-weight:normal;">8/8</div>
<div style="position:absolute;left:137.9px;top:368.95px;width:31.3px;height:15.050000000000011px;background:#4fad4a;"></div>
<div style="position:absolute;left:137.9px;top:368.95px;width:31.3px;height:0.8px;background:#a6d6a0;"></div>
<div style="position:absolute;left:32.2px;top:368.95px;width:105.7px;height:0.7px;background:#ebebeb;"></div>
<div style="position:absolute;left:35.6px;top:372.79999999999995px;width:7.2px;height:7.2px;background:#3c9c92;border-radius:50%;"></div>
<div class="t" style="left:47.8px;top:372.50px;font-size:6.5px;line-height:7.80px;color:#222;font-weight:normal;">IBR West</div>
<div class="t" style="left:-46.50px;width:400px;text-align:center;top:372.70px;font-size:7.0px;line-height:8.40px;color:#fff;font-weight:normal;">6/6</div>
<div style="position:absolute;left:137.9px;top:384.0px;width:31.3px;height:15.300000000000011px;background:#4fad4a;"></div>
<div style="position:absolute;left:137.9px;top:384.0px;width:31.3px;height:0.8px;background:#a6d6a0;"></div>
<div style="position:absolute;left:32.2px;top:384.0px;width:105.7px;height:0.7px;background:#ebebeb;"></div>
<div style="position:absolute;left:35.6px;top:388.0px;width:7.2px;height:7.2px;background:#e2b56e;border-radius:50%;"></div>
<div class="t" style="left:47.8px;top:387.70px;font-size:6.5px;line-height:7.80px;color:#222;font-weight:normal;">Holmead</div>
<div class="t" style="left:-46.50px;width:400px;text-align:center;top:387.90px;font-size:7.0px;line-height:8.40px;color:#fff;font-weight:normal;">5/5</div>
<div style="position:absolute;left:137.9px;top:399.3px;width:31.3px;height:16.05000000000001px;background:#4fad4a;"></div>
<div style="position:absolute;left:137.9px;top:399.3px;width:31.3px;height:0.8px;background:#a6d6a0;"></div>
<div style="position:absolute;left:32.2px;top:399.3px;width:105.7px;height:0.7px;background:#ebebeb;"></div>
<div style="position:absolute;left:35.6px;top:403.4px;width:7.2px;height:7.2px;background:#2a2c86;border-radius:50%;"></div>
<div class="t" style="left:47.8px;top:403.10px;font-size:6.5px;line-height:7.80px;color:#222;font-weight:normal;">Jay</div>
<div class="t" style="left:-46.50px;width:400px;text-align:center;top:403.30px;font-size:7.0px;line-height:8.40px;color:#fff;font-weight:normal;">1/1</div>
<div style="position:absolute;left:137.9px;top:415.35px;width:31.3px;height:15.949999999999932px;background:#e3e3e3;"></div>
<div style="position:absolute;left:137.9px;top:415.35px;width:31.3px;height:0.8px;background:#f4f4f4;"></div>
<div style="position:absolute;left:32.2px;top:415.35px;width:105.7px;height:0.7px;background:#ebebeb;"></div>
<div style="position:absolute;left:35.6px;top:420.09999999999997px;width:7.2px;height:7.2px;background:#3c9c92;border-radius:50%;"></div>
<div class="t" style="left:47.8px;top:419.80px;font-size:6.5px;line-height:7.80px;color:#222;font-weight:normal;">Kalorama</div>
<div class="t" style="left:-46.50px;width:400px;text-align:center;top:420.00px;font-size:7.0px;line-height:8.40px;color:#333;font-weight:normal;">0/0</div>
<div style="position:absolute;left:137.9px;top:431.29999999999995px;width:31.3px;height:14.900000000000034px;background:#4fad4a;"></div>
<div style="position:absolute;left:137.9px;top:431.29999999999995px;width:31.3px;height:0.8px;background:#a6d6a0;"></div>
<div style="position:absolute;left:32.2px;top:431.29999999999995px;width:105.7px;height:0.7px;background:#ebebeb;"></div>
<div style="position:absolute;left:35.6px;top:435.29999999999995px;width:7.2px;height:7.2px;background:#5a9cf8;border-radius:50%;"></div>
<div class="t" style="left:47.8px;top:435.00px;font-size:6.5px;line-height:7.80px;color:#222;font-weight:normal;">Unknown</div>
<div class="t" style="left:-46.50px;width:400px;text-align:center;top:435.20px;font-size:7.0px;line-height:8.40px;color:#fff;font-weight:normal;">2/2</div>
<div style="position:absolute;left:32.2px;top:446.2px;width:137px;height:0.7px;background:#ebebeb;"></div>
<div style="position:absolute;left:179.6px;top:227.6px;width:497.1px;height:19px;background:#ececec;border:1px solid #d8d8d8;"></div>
<div style="position:absolute;left:218px;top:230.5px;width:0.8px;height:13px;background:#cfcfcf;"></div>
<div style="position:absolute;left:251px;top:230.5px;width:0.8px;height:13px;background:#cfcfcf;"></div>
<div style="position:absolute;left:290px;top:230.5px;width:0.8px;height:13px;background:#cfcfcf;"></div>
<div style="position:absolute;left:317px;top:230.5px;width:0.8px;height:13px;background:#cfcfcf;"></div>
<div style="position:absolute;left:330.5px;top:230.5px;width:0.8px;height:13px;background:#cfcfcf;"></div>
<div style="position:absolute;left:344px;top:230.5px;width:0.8px;height:13px;background:#cfcfcf;"></div>
<div style="position:absolute;left:616.3px;top:230.5px;width:0.8px;height:13px;background:#cfcfcf;"></div>
<div style="position:absolute;left:528.4px;top:233.2px;width:33.200000000000045px;height:8.5px;background:#f3f3f3;border:1px solid #c4c4c4;border-radius:1.5px;"></div>
<div class="t" style="left:345.00px;width:400px;text-align:center;top:234.40px;font-size:5.0px;line-height:6.00px;color:#222;font-weight:normal;">Analyze</div>
<div style="position:absolute;left:578.4px;top:233.2px;width:36.0px;height:8.5px;background:#f3f3f3;border:1px solid #c4c4c4;border-radius:1.5px;"></div>
<div class="t" style="left:396.40px;width:400px;text-align:center;top:234.34px;font-size:5.1px;line-height:6.12px;color:#222;font-weight:normal;">Calculate</div>
<div style="position:absolute;left:618.3px;top:233.2px;width:56.200000000000045px;height:8.5px;background:#f3f3f3;border:1px solid #c4c4c4;border-radius:1.5px;"></div>
<div class="t" style="left:446.40px;width:400px;text-align:center;top:234.34px;font-size:5.1px;line-height:6.12px;color:#222;font-weight:normal;">Assign and Deploy</div>
<div style="position:absolute;left:563.5px;top:233.8px;width:6px;height:6.5px;background:#fff;border:1px solid #c8c8c8;border-radius:1px;"></div>
<div style="position:absolute;left:181.2px;top:254.5px;width:494.5px;height:9px;background:#e3e3e3;border-radius:3px 3px 0 0;"></div>
<div style="position:absolute;left:181.2px;top:262.8px;width:494.5px;height:222px;background:#fff;border:1px solid #bcbcbc;"></div>
<div style="position:absolute;left:181.7px;top:263.3px;width:493.5px;height:16.3px;background:linear-gradient(#e4e4ea,#d4d5e3 40%,#c3c4d4 70%,#b3b4c3);border-top:1px solid #8a8a8a;border-bottom:1px solid #8e8e8e;"></div>
<div style="position:absolute;left:193.9px;top:263.3px;width:1.1px;height:16.3px;background:#707078;"></div>
<div style="position:absolute;left:262.0px;top:263.3px;width:1.1px;height:16.3px;background:#707078;"></div>
<div style="position:absolute;left:303.8px;top:263.3px;width:1.1px;height:16.3px;background:#707078;"></div>
<div style="position:absolute;left:346.1px;top:263.3px;width:1.1px;height:16.3px;background:#707078;"></div>
<div class="t" style="left:198.5px;top:268.83px;font-size:5.45px;line-height:6.54px;color:#222;font-weight:normal;">Frequency (MHz)</div>
<div class="t" style="left:266.3px;top:268.83px;font-size:5.45px;line-height:6.54px;color:#222;font-weight:normal;">G &amp; Ch</div>
<div class="t" style="left:307.8px;top:268.83px;font-size:5.45px;line-height:6.54px;color:#222;font-weight:normal;">Source</div>
<div class="t" style="left:140.50px;width:400px;text-align:center;top:267.90px;font-size:5.5px;line-height:6.60px;color:#333;font-weight:normal;">&#708;</div>
<div class="t" style="left:350.0px;top:268.83px;font-size:5.45px;line-height:6.54px;color:#222;font-weight:normal;">Analysis Results</div>
<div style="position:absolute;left:181.7px;top:279.7px;width:493.5px;height:1.3px;background:#d6d6d6;"></div>
<div style="position:absolute;left:181.7px;top:294px;width:493.5px;height:1.8px;background:#e0e0e0;"></div>
<div style="position:absolute;left:181.7px;top:281px;width:493.5px;height:13px;background:#a2a1a6;"></div>
<div class="t" style="left:197.9px;top:284.48px;font-size:5.7px;line-height:6.84px;color:#111;font-weight:bold;">UHFR - H4</div>
<div class="t" style="left:218.30px;width:400px;text-align:right;top:284.58px;font-size:5.7px;line-height:6.84px;color:#111;font-weight:bold;">Standard</div>
<div style="position:absolute;left:638px;top:281px;width:37.2px;height:13px;background:#52bb48;"></div>
<div class="t" style="left:456.50px;width:400px;text-align:center;top:284.16px;font-size:6.4px;line-height:7.68px;color:#1a4a1a;font-weight:normal;">4/4</div>
<div style="position:absolute;left:181.7px;top:295.8px;width:493.5px;height:13.399999999999977px;background:#c2c2c2;"></div>
<div style="position:absolute;left:183.9px;top:297.8px;width:10px;height:9.999999999999977px;background:#f2f2f2;"></div>
<div style="position:absolute;left:185.1px;top:301.65px;width:7px;height:1.1px;background:#111;"></div>
<div style="position:absolute;left:188.05px;top:298.7px;width:1.1px;height:7px;background:#111;"></div>
<div class="t" style="left:197.9px;top:298.66px;font-size:6.4px;line-height:7.68px;color:#222;font-weight:normal;">Backup Frequencies</div>
<div class="t" style="left:456.50px;width:400px;text-align:center;top:298.60px;font-size:7.0px;line-height:8.40px;color:#222;font-weight:normal;">4/4</div>
<div style="position:absolute;left:185.6px;top:314.0px;width:5.2px;height:4.6px;background:#111;border-radius:0.6px;"></div>
<div style="position:absolute;left:186.5px;top:310.7px;width:3.4px;height:4.4px;border:1px solid #111;border-bottom:none;border-radius:1.7px 1.7px 0 0;"></div>
<div class="t" style="left:197.9px;top:310.84px;font-size:6.1px;line-height:7.32px;color:#111;font-weight:bold;">560.400 MHz</div>
<div class="t" style="left:264.7px;top:310.99px;font-size:5.85px;line-height:7.02px;color:#333;font-weight:normal;">G:-- Ch:--</div>
<div class="t" style="left:306.6px;top:310.90px;font-size:6.0px;line-height:7.20px;color:#222;font-weight:normal;">GS-12</div>
<div class="t" style="left:348.9px;top:310.66px;font-size:6.4px;line-height:7.68px;color:#111;font-weight:normal;">Not analyzed</div>
<div style="position:absolute;left:181.7px;top:319.03px;width:493.5px;height:9px;background:#f3f4f4;"></div>
<div style="position:absolute;left:261.6px;top:319.03px;width:2px;height:9px;background:#fff;"></div>
<div style="position:absolute;left:303.4px;top:319.03px;width:2px;height:9px;background:#fff;"></div>
<div style="position:absolute;left:345.7px;top:319.03px;width:2px;height:9px;background:#fff;"></div>
<div style="position:absolute;left:185.6px;top:323.03px;width:5.2px;height:4.6px;background:#111;border-radius:0.6px;"></div>
<div style="position:absolute;left:186.5px;top:319.72999999999996px;width:3.4px;height:4.4px;border:1px solid #111;border-bottom:none;border-radius:1.7px 1.7px 0 0;"></div>
<div class="t" style="left:197.9px;top:319.87px;font-size:6.1px;line-height:7.32px;color:#111;font-weight:bold;">561.975 MHz</div>
<div class="t" style="left:264.7px;top:320.02px;font-size:5.85px;line-height:7.02px;color:#333;font-weight:normal;">G:-- Ch:--</div>
<div class="t" style="left:306.6px;top:319.93px;font-size:6.0px;line-height:7.20px;color:#222;font-weight:normal;">GS-10</div>
<div class="t" style="left:348.9px;top:319.69px;font-size:6.4px;line-height:7.68px;color:#111;font-weight:normal;">Not analyzed</div>
<div style="position:absolute;left:185.6px;top:332.06px;width:5.2px;height:4.6px;background:#111;border-radius:0.6px;"></div>
<div style="position:absolute;left:186.5px;top:328.76px;width:3.4px;height:4.4px;border:1px solid #111;border-bottom:none;border-radius:1.7px 1.7px 0 0;"></div>
<div class="t" style="left:197.9px;top:328.90px;font-size:6.1px;line-height:7.32px;color:#111;font-weight:bold;">577.975 MHz</div>
<div class="t" style="left:264.7px;top:329.05px;font-size:5.85px;line-height:7.02px;color:#333;font-weight:normal;">G:-- Ch:--</div>
<div class="t" style="left:306.6px;top:328.96px;font-size:6.0px;line-height:7.20px;color:#222;font-weight:normal;">GS-09</div>
<div class="t" style="left:348.9px;top:328.72px;font-size:6.4px;line-height:7.68px;color:#111;font-weight:normal;">Not analyzed</div>
<div style="position:absolute;left:181.7px;top:337.09px;width:493.5px;height:9px;background:#f3f4f4;"></div>
<div style="position:absolute;left:261.6px;top:337.09px;width:2px;height:9px;background:#fff;"></div>
<div style="position:absolute;left:303.4px;top:337.09px;width:2px;height:9px;background:#fff;"></div>
<div style="position:absolute;left:345.7px;top:337.09px;width:2px;height:9px;background:#fff;"></div>
<div style="position:absolute;left:185.6px;top:341.09px;width:5.2px;height:4.6px;background:#111;border-radius:0.6px;"></div>
<div style="position:absolute;left:186.5px;top:337.78999999999996px;width:3.4px;height:4.4px;border:1px solid #111;border-bottom:none;border-radius:1.7px 1.7px 0 0;"></div>
<div class="t" style="left:197.9px;top:337.93px;font-size:6.1px;line-height:7.32px;color:#111;font-weight:bold;">559.475 MHz</div>
<div class="t" style="left:264.7px;top:338.08px;font-size:5.85px;line-height:7.02px;color:#333;font-weight:normal;">G:-- Ch:--</div>
<div class="t" style="left:306.6px;top:337.99px;font-size:6.0px;line-height:7.20px;color:#222;font-weight:normal;">GS-11</div>
<div class="t" style="left:348.9px;top:337.75px;font-size:6.4px;line-height:7.68px;color:#111;font-weight:normal;">Not analyzed</div>
<div style="position:absolute;left:181.7px;top:346.0px;width:493.5px;height:1.3px;background:#d6d6d6;"></div>
<div style="position:absolute;left:181.7px;top:361.1px;width:493.5px;height:1.8px;background:#e0e0e0;"></div>
<div style="position:absolute;left:181.7px;top:347.3px;width:493.5px;height:13.800000000000011px;background:#a2a1a6;"></div>
<div class="t" style="left:197.9px;top:351.18px;font-size:5.7px;line-height:6.84px;color:#111;font-weight:bold;">ULXD - G50 - Standard</div>
<div class="t" style="left:218.30px;width:400px;text-align:right;top:351.28px;font-size:5.7px;line-height:6.84px;color:#111;font-weight:bold;">Standard</div>
<div style="position:absolute;left:638px;top:347.3px;width:37.2px;height:13.800000000000011px;background:#52bb48;"></div>
<div class="t" style="left:456.50px;width:400px;text-align:center;top:350.86px;font-size:6.4px;line-height:7.68px;color:#1a4a1a;font-weight:normal;">10/10</div>
<div style="position:absolute;left:181.7px;top:362.8px;width:493.5px;height:12.699999999999989px;background:#c2c2c2;"></div>
<div style="position:absolute;left:183.9px;top:364.8px;width:10px;height:9.299999999999988px;background:#f2f2f2;"></div>
<div style="position:absolute;left:185.1px;top:368.29999999999995px;width:7px;height:1.1px;background:#111;"></div>
<div style="position:absolute;left:188.05px;top:365.34999999999997px;width:1.1px;height:7px;background:#111;"></div>
<div class="t" style="left:197.9px;top:365.31px;font-size:6.4px;line-height:7.68px;color:#222;font-weight:normal;">Primary Frequencies</div>
<div class="t" style="left:456.50px;width:400px;text-align:center;top:365.25px;font-size:7.0px;line-height:8.40px;color:#222;font-weight:normal;">10/10</div>
<div style="position:absolute;left:185.6px;top:380.7px;width:5.2px;height:4.6px;background:#111;border-radius:0.6px;"></div>
<div style="position:absolute;left:186.5px;top:377.4px;width:3.4px;height:4.4px;border:1px solid #111;border-bottom:none;border-radius:1.7px 1.7px 0 0;"></div>
<div class="t" style="left:197.9px;top:377.54px;font-size:6.1px;line-height:7.32px;color:#111;font-weight:bold;">528.200 MHz</div>
<div class="t" style="left:264.7px;top:377.69px;font-size:5.85px;line-height:7.02px;color:#333;font-weight:normal;">G:-- Ch:--</div>
<div class="t" style="left:306.6px;top:377.60px;font-size:6.0px;line-height:7.20px;color:#222;font-weight:normal;">GS_03</div>
<div class="t" style="left:348.9px;top:377.36px;font-size:6.4px;line-height:7.68px;color:#111;font-weight:normal;">Not analyzed</div>
<div style="position:absolute;left:181.7px;top:385.72999999999996px;width:493.5px;height:9px;background:#f3f4f4;"></div>
<div style="position:absolute;left:261.6px;top:385.72999999999996px;width:2px;height:9px;background:#fff;"></div>
<div style="position:absolute;left:303.4px;top:385.72999999999996px;width:2px;height:9px;background:#fff;"></div>
<div style="position:absolute;left:345.7px;top:385.72999999999996px;width:2px;height:9px;background:#fff;"></div>
<div style="position:absolute;left:185.6px;top:389.72999999999996px;width:5.2px;height:4.6px;background:#111;border-radius:0.6px;"></div>
<div style="position:absolute;left:186.5px;top:386.42999999999995px;width:3.4px;height:4.4px;border:1px solid #111;border-bottom:none;border-radius:1.7px 1.7px 0 0;"></div>
<div class="t" style="left:197.9px;top:386.57px;font-size:6.1px;line-height:7.32px;color:#111;font-weight:bold;">522.675 MHz</div>
<div class="t" style="left:264.7px;top:386.72px;font-size:5.85px;line-height:7.02px;color:#333;font-weight:normal;">G:-- Ch:--</div>
<div class="t" style="left:306.6px;top:386.63px;font-size:6.0px;line-height:7.20px;color:#222;font-weight:normal;">GS_13</div>
<div class="t" style="left:348.9px;top:386.39px;font-size:6.4px;line-height:7.68px;color:#111;font-weight:normal;">Not analyzed</div>
<div style="position:absolute;left:185.6px;top:398.76px;width:5.2px;height:4.6px;background:#111;border-radius:0.6px;"></div>
<div style="position:absolute;left:186.5px;top:395.46px;width:3.4px;height:4.4px;border:1px solid #111;border-bottom:none;border-radius:1.7px 1.7px 0 0;"></div>
<div class="t" style="left:197.9px;top:395.60px;font-size:6.1px;line-height:7.32px;color:#111;font-weight:bold;">528.600 MHz</div>
<div class="t" style="left:264.7px;top:395.75px;font-size:5.85px;line-height:7.02px;color:#333;font-weight:normal;">G:-- Ch:--</div>
<div class="t" style="left:306.6px;top:395.66px;font-size:6.0px;line-height:7.20px;color:#222;font-weight:normal;">GS_01</div>
<div class="t" style="left:348.9px;top:395.42px;font-size:6.4px;line-height:7.68px;color:#111;font-weight:normal;">Not analyzed</div>
<div style="position:absolute;left:181.7px;top:403.78999999999996px;width:493.5px;height:9px;background:#f3f4f4;"></div>
<div style="position:absolute;left:261.6px;top:403.78999999999996px;width:2px;height:9px;background:#fff;"></div>
<div style="position:absolute;left:303.4px;top:403.78999999999996px;width:2px;height:9px;background:#fff;"></div>
<div style="position:absolute;left:345.7px;top:403.78999999999996px;width:2px;height:9px;background:#fff;"></div>
<div style="position:absolute;left:185.6px;top:407.78999999999996px;width:5.2px;height:4.6px;background:#111;border-radius:0.6px;"></div>
<div style="position:absolute;left:186.5px;top:404.48999999999995px;width:3.4px;height:4.4px;border:1px solid #111;border-bottom:none;border-radius:1.7px 1.7px 0 0;"></div>
<div class="t" style="left:197.9px;top:404.63px;font-size:6.1px;line-height:7.32px;color:#111;font-weight:bold;">526.975 MHz</div>
<div class="t" style="left:264.7px;top:404.78px;font-size:5.85px;line-height:7.02px;color:#333;font-weight:normal;">G:-- Ch:--</div>
<div class="t" style="left:306.6px;top:404.69px;font-size:6.0px;line-height:7.20px;color:#222;font-weight:normal;">GS_02</div>
<div class="t" style="left:348.9px;top:404.45px;font-size:6.4px;line-height:7.68px;color:#111;font-weight:normal;">Not analyzed</div>
<div style="position:absolute;left:185.6px;top:416.82px;width:5.2px;height:4.6px;background:#111;border-radius:0.6px;"></div>
<div style="position:absolute;left:186.5px;top:413.52px;width:3.4px;height:4.4px;border:1px solid #111;border-bottom:none;border-radius:1.7px 1.7px 0 0;"></div>
<div class="t" style="left:197.9px;top:413.66px;font-size:6.1px;line-height:7.32px;color:#111;font-weight:bold;">518.350 MHz</div>
<div class="t" style="left:264.7px;top:413.81px;font-size:5.85px;line-height:7.02px;color:#333;font-weight:normal;">G:-- Ch:--</div>
<div class="t" style="left:306.6px;top:413.72px;font-size:6.0px;line-height:7.20px;color:#222;font-weight:normal;">GS_06</div>
<div class="t" style="left:348.9px;top:413.48px;font-size:6.4px;line-height:7.68px;color:#111;font-weight:normal;">Not analyzed</div>
<div style="position:absolute;left:181.7px;top:421.84999999999997px;width:493.5px;height:9px;background:#f3f4f4;"></div>
<div style="position:absolute;left:261.6px;top:421.84999999999997px;width:2px;height:9px;background:#fff;"></div>
<div style="position:absolute;left:303.4px;top:421.84999999999997px;width:2px;height:9px;background:#fff;"></div>
<div style="position:absolute;left:345.7px;top:421.84999999999997px;width:2px;height:9px;background:#fff;"></div>
<div style="position:absolute;left:185.6px;top:425.84999999999997px;width:5.2px;height:4.6px;background:#111;border-radius:0.6px;"></div>
<div style="position:absolute;left:186.5px;top:422.54999999999995px;width:3.4px;height:4.4px;border:1px solid #111;border-bottom:none;border-radius:1.7px 1.7px 0 0;"></div>
<div class="t" style="left:197.9px;top:422.69px;font-size:6.1px;line-height:7.32px;color:#111;font-weight:bold;">519.025 MHz</div>
<div class="t" style="left:264.7px;top:422.84px;font-size:5.85px;line-height:7.02px;color:#333;font-weight:normal;">G:-- Ch:--</div>
<div class="t" style="left:306.6px;top:422.75px;font-size:6.0px;line-height:7.20px;color:#222;font-weight:normal;">GS_08</div>
<div class="t" style="left:348.9px;top:422.51px;font-size:6.4px;line-height:7.68px;color:#111;font-weight:normal;">Not analyzed</div>
<div style="position:absolute;left:185.6px;top:434.88px;width:5.2px;height:4.6px;background:#111;border-radius:0.6px;"></div>
<div style="position:absolute;left:186.5px;top:431.58px;width:3.4px;height:4.4px;border:1px solid #111;border-bottom:none;border-radius:1.7px 1.7px 0 0;"></div>
<div class="t" style="left:197.9px;top:431.72px;font-size:6.1px;line-height:7.32px;color:#111;font-weight:bold;">526.550 MHz</div>
<div class="t" style="left:264.7px;top:431.87px;font-size:5.85px;line-height:7.02px;color:#333;font-weight:normal;">G:-- Ch:--</div>
<div class="t" style="left:306.6px;top:431.78px;font-size:6.0px;line-height:7.20px;color:#222;font-weight:normal;">GS_05</div>
<div class="t" style="left:348.9px;top:431.54px;font-size:6.4px;line-height:7.68px;color:#111;font-weight:normal;">Not analyzed</div>
<div style="position:absolute;left:181.7px;top:439.90999999999997px;width:493.5px;height:9px;background:#f3f4f4;"></div>
<div style="position:absolute;left:261.6px;top:439.90999999999997px;width:2px;height:9px;background:#fff;"></div>
<div style="position:absolute;left:303.4px;top:439.90999999999997px;width:2px;height:9px;background:#fff;"></div>
<div style="position:absolute;left:345.7px;top:439.90999999999997px;width:2px;height:9px;background:#fff;"></div>
<div style="position:absolute;left:185.6px;top:443.90999999999997px;width:5.2px;height:4.6px;background:#111;border-radius:0.6px;"></div>
<div style="position:absolute;left:186.5px;top:440.60999999999996px;width:3.4px;height:4.4px;border:1px solid #111;border-bottom:none;border-radius:1.7px 1.7px 0 0;"></div>
<div class="t" style="left:197.9px;top:440.75px;font-size:6.1px;line-height:7.32px;color:#111;font-weight:bold;">521.600 MHz</div>
<div class="t" style="left:264.7px;top:440.90px;font-size:5.85px;line-height:7.02px;color:#333;font-weight:normal;">G:-- Ch:--</div>
<div class="t" style="left:306.6px;top:440.81px;font-size:6.0px;line-height:7.20px;color:#222;font-weight:normal;">GS_14</div>
<div class="t" style="left:348.9px;top:440.57px;font-size:6.4px;line-height:7.68px;color:#111;font-weight:normal;">Not analyzed</div>
<div style="position:absolute;left:185.6px;top:452.94px;width:5.2px;height:4.6px;background:#111;border-radius:0.6px;"></div>
<div style="position:absolute;left:186.5px;top:449.64px;width:3.4px;height:4.4px;border:1px solid #111;border-bottom:none;border-radius:1.7px 1.7px 0 0;"></div>
<div class="t" style="left:197.9px;top:449.78px;font-size:6.1px;line-height:7.32px;color:#111;font-weight:bold;">527.625 MHz</div>
<div class="t" style="left:264.7px;top:449.93px;font-size:5.85px;line-height:7.02px;color:#333;font-weight:normal;">G:-- Ch:--</div>
<div class="t" style="left:306.6px;top:449.84px;font-size:6.0px;line-height:7.20px;color:#222;font-weight:normal;">GS_04</div>
<div class="t" style="left:348.9px;top:449.60px;font-size:6.4px;line-height:7.68px;color:#111;font-weight:normal;">Not analyzed</div>
<div style="position:absolute;left:181.7px;top:457.96999999999997px;width:493.5px;height:9px;background:#f3f4f4;"></div>
<div style="position:absolute;left:261.6px;top:457.96999999999997px;width:2px;height:9px;background:#fff;"></div>
<div style="position:absolute;left:303.4px;top:457.96999999999997px;width:2px;height:9px;background:#fff;"></div>
<div style="position:absolute;left:345.7px;top:457.96999999999997px;width:2px;height:9px;background:#fff;"></div>
<div style="position:absolute;left:185.6px;top:461.96999999999997px;width:5.2px;height:4.6px;background:#111;border-radius:0.6px;"></div>
<div style="position:absolute;left:186.5px;top:458.66999999999996px;width:3.4px;height:4.4px;border:1px solid #111;border-bottom:none;border-radius:1.7px 1.7px 0 0;"></div>
<div class="t" style="left:197.9px;top:458.81px;font-size:6.1px;line-height:7.32px;color:#111;font-weight:bold;">526.000 MHz</div>
<div class="t" style="left:264.7px;top:458.96px;font-size:5.85px;line-height:7.02px;color:#333;font-weight:normal;">G:-- Ch:--</div>
<div class="t" style="left:306.6px;top:458.87px;font-size:6.0px;line-height:7.20px;color:#222;font-weight:normal;">GS_07</div>
<div class="t" style="left:348.9px;top:458.63px;font-size:6.4px;line-height:7.68px;color:#111;font-weight:normal;">Not analyzed</div>
<div style="position:absolute;left:181.2px;top:486.9px;width:496px;height:14.7px;background:#ebebeb;border:1px solid #dadada;"></div>
<div class="t" style="left:271.50px;width:400px;text-align:right;top:489.64px;font-size:6.6px;line-height:7.92px;color:#111;font-weight:bold;">72/72</div>
<div style="position:absolute;left:691.7px;top:234px;width:295.4px;height:261.7px;background:#e2e2e2;border:1px solid #d2d2d2;border-radius:3px 3px 0 0;"></div>
<div style="position:absolute;left:691.7px;top:242px;width:295.4px;height:0.9px;background:#b9b9b9;"></div>
<div style="position:absolute;left:696px;top:245px;width:288px;height:249.5px;background:#dcdcdc;border:1px solid #d0d0d0;border-bottom:none;"></div>
<div style="position:absolute;left:735.6px;top:229.6px;width:204.6px;height:9.8px;background:#fff;border:1px solid #d8d8d8;border-radius:2.5px;box-shadow:0 0.5px 1px rgba(0,0,0,0.15);"></div>
<div style="position:absolute;left:735.6px;top:229.6px;width:78.2px;height:9.8px;background:#1b7ef5;border-radius:2.5px 0 0 2.5px;"></div>
<div style="position:absolute;left:873.5px;top:231px;width:0.7px;height:7px;background:#d8d8d8;"></div>
<div class="t" style="left:751.2px;top:231.20px;font-size:5.5px;line-height:6.60px;color:#fff;font-weight:normal;">Add Frequencies</div>
<div class="t" style="left:830.5px;top:230.90px;font-size:6.0px;line-height:7.20px;color:#222;font-weight:normal;">Spectrum</div>
<div class="t" style="left:891px;top:230.58px;font-size:6.2px;line-height:7.44px;color:#222;font-weight:normal;">Compatibility</div>
<div style="position:absolute;left:702.3px;top:251.4px;width:274.5px;height:11.5px;background:#f3f3f3;border:1px solid #cdcdcd;border-radius:2px;"></div>
<div class="t" style="left:639.50px;width:400px;text-align:center;top:253.65px;font-size:5.92px;line-height:7.10px;color:#222;font-weight:normal;">Select Frequencies From Inventory...</div>
<div style="position:absolute;left:702.3px;top:267.3px;width:274.5px;height:0.8px;background:#cacaca;"></div>
<div style="position:absolute;left:702.3px;top:270.5px;width:274.5px;height:14.5px;background:#a9a9a9;"></div>
<div class="t" style="left:639.50px;width:400px;text-align:center;top:274.13px;font-size:6.12px;line-height:7.34px;color:#111;font-weight:bold;">Request Additional Frequencies</div>
<div class="t" style="left:701.9px;top:297.56px;font-size:6.4px;line-height:7.68px;color:#111;font-weight:normal;">Manufacturer:</div>
<div style="position:absolute;left:837.6px;top:296.29999999999995px;width:137.1px;height:10.2px;background:#fff;border-radius:2px;box-shadow:0 0 0 0.5px #c8c8c8, 0 0.6px 0.8px rgba(0,0,0,0.2);"></div>
<div class="t" style="left:841.5px;top:297.86px;font-size:5.9px;line-height:7.08px;color:#222;font-weight:normal;">Shure</div>
<div style="position:absolute;left:966.8px;top:297.4px;width:7.6px;height:8px;background:#1b7ef5;border-radius:2px;"></div>
<svg style="left:966.8px;top:297.40px" width="7.6" height="8" viewBox="0 0 7.6 8"><path d="M2.3,3.1 L3.8,1.7 L5.3,3.1 M2.3,4.9 L3.8,6.3 L5.3,4.9" stroke="#fff" stroke-width="0.8" fill="none"/></svg>
<div class="t" style="left:701.9px;top:313.96px;font-size:6.4px;line-height:7.68px;color:#111;font-weight:normal;">Model:</div>
<div style="position:absolute;left:837.6px;top:312.7px;width:137.1px;height:10.2px;background:#fff;border-radius:2px;box-shadow:0 0 0 0.5px #c8c8c8, 0 0.6px 0.8px rgba(0,0,0,0.2);"></div>
<div class="t" style="left:841.5px;top:314.26px;font-size:5.9px;line-height:7.08px;color:#222;font-weight:normal;">ULXD4</div>
<div style="position:absolute;left:966.8px;top:313.8px;width:7.6px;height:8px;background:#1b7ef5;border-radius:2px;"></div>
<svg style="left:966.8px;top:313.80px" width="7.6" height="8" viewBox="0 0 7.6 8"><path d="M2.3,3.1 L3.8,1.7 L5.3,3.1 M2.3,4.9 L3.8,6.3 L5.3,4.9" stroke="#fff" stroke-width="0.8" fill="none"/></svg>
<div class="t" style="left:701.9px;top:330.26px;font-size:6.4px;line-height:7.68px;color:#111;font-weight:normal;">Band:</div>
<div style="position:absolute;left:837.6px;top:329.0px;width:137.1px;height:10.2px;background:#fff;border-radius:2px;box-shadow:0 0 0 0.5px #c8c8c8, 0 0.6px 0.8px rgba(0,0,0,0.2);"></div>
<div class="t" style="left:841.5px;top:330.56px;font-size:5.9px;line-height:7.08px;color:#222;font-weight:normal;">G50</div>
<div style="position:absolute;left:966.8px;top:330.1px;width:7.6px;height:8px;background:#1b7ef5;border-radius:2px;"></div>
<svg style="left:966.8px;top:330.10px" width="7.6" height="8" viewBox="0 0 7.6 8"><path d="M2.3,3.1 L3.8,1.7 L5.3,3.1 M2.3,4.9 L3.8,6.3 L5.3,4.9" stroke="#fff" stroke-width="0.8" fill="none"/></svg>
<div class="t" style="left:701.9px;top:345.56px;font-size:6.4px;line-height:7.68px;color:#111;font-weight:normal;">RF Profile:</div>
<div style="position:absolute;left:837.6px;top:344.29999999999995px;width:137.1px;height:10.2px;background:#fff;border-radius:2px;box-shadow:0 0 0 0.5px #c8c8c8, 0 0.6px 0.8px rgba(0,0,0,0.2);"></div>
<div class="t" style="left:841.5px;top:345.86px;font-size:5.9px;line-height:7.08px;color:#222;font-weight:normal;">Standard</div>
<div style="position:absolute;left:966.8px;top:345.4px;width:7.6px;height:8px;background:#1b7ef5;border-radius:2px;"></div>
<svg style="left:966.8px;top:345.40px" width="7.6" height="8" viewBox="0 0 7.6 8"><path d="M2.3,3.1 L3.8,1.7 L5.3,3.1 M2.3,4.9 L3.8,6.3 L5.3,4.9" stroke="#fff" stroke-width="0.8" fill="none"/></svg>
<div class="t" style="left:701.9px;top:365.56px;font-size:6.4px;line-height:7.68px;color:#111;font-weight:normal;">RF zone:</div>
<div style="position:absolute;left:837.6px;top:364.29999999999995px;width:137.1px;height:10.2px;background:#fff;border-radius:2px;box-shadow:0 0 0 0.5px #c8c8c8, 0 0.6px 0.8px rgba(0,0,0,0.2);"></div>
<div class="t" style="left:841.5px;top:365.86px;font-size:5.9px;line-height:7.08px;color:#222;font-weight:normal;">IBR Center (GS)</div>
<div style="position:absolute;left:966.8px;top:365.4px;width:7.6px;height:8px;background:#1b7ef5;border-radius:2px;"></div>
<svg style="left:966.8px;top:365.40px" width="7.6" height="8" viewBox="0 0 7.6 8"><path d="M2.3,3.1 L3.8,1.7 L5.3,3.1 M2.3,4.9 L3.8,6.3 L5.3,4.9" stroke="#fff" stroke-width="0.8" fill="none"/></svg>
<div class="t" style="left:701.9px;top:381.42px;font-size:6.3px;line-height:7.56px;color:#b4b4b4;font-weight:normal;">Inclusion group:</div>
<div style="position:absolute;left:837.6px;top:380.2px;width:137.1px;height:10px;background:#e9e9e9;border:1px solid #dadada;border-radius:2px;"></div>
<svg style="left:967.8px;top:381.4px" width="6.4" height="7.6" viewBox="0 0 6.4 7.6"><path d="M1.8,3 L3.2,1.6 L4.6,3 M1.8,4.6 L3.2,6 L4.6,4.6" stroke="#b8b8b8" stroke-width="0.7" fill="none"/></svg>
<div style="position:absolute;left:702.3px;top:395.3px;width:274.5px;height:0.8px;background:#d0d0d0;"></div>
<div class="t" style="left:701.9px;top:399.26px;font-size:6.4px;line-height:7.68px;color:#111;font-weight:normal;">Quantity:</div>
<div style="position:absolute;left:836px;top:399.2px;width:132.8px;height:8px;background:#fff;border:1px solid #cfcfcf;"></div>
<div class="t" style="left:838px;top:399.72px;font-size:5.8px;line-height:6.96px;color:#111;font-weight:normal;">10</div>
<div style="position:absolute;left:970px;top:398.4px;width:6px;height:9.4px;background:#fff;border-radius:2.5px;box-shadow:0 0 0 0.4px #c8c8c8;"></div>
<svg style="left:970px;top:398.4px" width="6" height="9.4" viewBox="0 0 6 9.4"><path d="M1.4,3.4 L3,1.7 L4.6,3.4 M1.4,6 L3,7.7 L4.6,6" stroke="#333" stroke-width="0.7" fill="none"/></svg>
<div class="t" style="left:701.9px;top:410.86px;font-size:6.4px;line-height:7.68px;color:#111;font-weight:normal;">Add frequencies as:</div>
<div style="position:absolute;left:836.4px;top:412px;width:6.8px;height:6.8px;background:#1b7ef5;border-radius:50%;"></div>
<div style="position:absolute;left:838.4px;top:414px;width:2.8px;height:2.8px;background:#fff;border-radius:50%;"></div>
<div class="t" style="left:845.6px;top:411.60px;font-size:6.5px;line-height:7.80px;color:#222;font-weight:normal;">Primary</div>
<div style="position:absolute;left:836.4px;top:422.4px;width:6.8px;height:6.8px;background:#fff;border-radius:50%;box-shadow:0 0 0 0.4px #c8c8c8;"></div>
<div class="t" style="left:845.6px;top:422.12px;font-size:6.3px;line-height:7.56px;color:#222;font-weight:normal;">Backup</div>
<div style="position:absolute;left:701.9px;top:432.6px;width:274.9px;height:11.9px;background:#f3f3f3;border:1px solid #cdcdcd;border-radius:2px;"></div>
<div class="t" style="left:639.50px;width:400px;text-align:center;top:434.88px;font-size:6.2px;line-height:7.44px;color:#111;font-weight:normal;">Add</div>
<div style="position:absolute;left:172.8px;top:364.09999999999997px;width:2.2px;height:2.2px;background:#d2d2d2;border-radius:50%;"></div>
<div style="position:absolute;left:680.9px;top:363.9px;width:2.2px;height:2.2px;background:#d2d2d2;border-radius:50%;"></div>
<div style="position:absolute;left:235.6px;top:149.3px;width:2.2px;height:2.2px;background:#d2d2d2;border-radius:50%;"></div>
<div style="position:absolute;left:510.4px;top:223.20000000000002px;width:2.2px;height:2.2px;background:#d2d2d2;border-radius:50%;"></div>
<div style="position:absolute;left:787.6999999999999px;top:149.3px;width:2.2px;height:2.2px;background:#d2d2d2;border-radius:50%;"></div>
<div style="position:absolute;left:28px;top:503px;width:967px;height:22.5px;background:linear-gradient(#e8e8e8,#c0c0c0);border-top:1px solid #b5b5b5;border-radius:0 0 5px 5px;"></div>
<div style="position:absolute;left:33px;top:511px;width:6px;height:6px;background:#cfcfcf;border-radius:50%;"></div>
<div class="t" style="left:44.8px;top:510.74px;font-size:5.6px;line-height:6.72px;color:#222;font-weight:bold;">0 Devices Identified</div>
<div style="position:absolute;left:105.1px;top:508.3px;width:43.9px;height:11.4px;background:#e0e0e0;border-radius:2px;"></div>
<div class="t" style="left:-73.00px;width:400px;text-align:center;top:510.40px;font-size:6.0px;line-height:7.20px;color:#8a8a8a;font-weight:normal;">Dismiss all</div>
<div style="position:absolute;left:157px;top:507.5px;width:47.8px;height:12.8px;background:#fafafa;border:0.6px solid #cfcfcf;border-radius:2px;"></div>
<div class="t" style="left:-19.10px;width:400px;text-align:center;top:510.37px;font-size:6.05px;line-height:7.26px;color:#111;font-weight:normal;">Flash all devices</div>
<div style="position:absolute;left:215.6px;top:512px;width:6px;height:6px;background:#cacaca;border-radius:50%;"></div>
<div class="t" style="left:228px;top:511.73px;font-size:5.45px;line-height:6.54px;color:#222;font-weight:bold;">Timeline</div>
<div class="t" style="left:254.8px;top:511.64px;font-size:5.6px;line-height:6.72px;color:#222;font-weight:bold;">0 B</div>
<div style="position:absolute;left:889px;top:509.1px;width:83.5px;height:10.1px;background:#fff;border-radius:4px;"></div>
<div style="position:absolute;left:892.4px;top:511.2px;width:6.2px;height:6.2px;background:radial-gradient(circle at 40% 40%,#c8e64a,#5aa02a);border-radius:50%;"></div>
<div class="t" style="left:901.8px;top:510.74px;font-size:5.77px;line-height:6.92px;color:#222;font-weight:normal;">0 Devices Online</div>
<div style="position:absolute;left:981.1px;top:511.2px;width:8.6px;height:7.9px;background:#43b43a;border:0.8px solid #1f6a1f;border-radius:1px;"></div>
<div style="position:absolute;left:985.6px;top:507.2px;width:4.6px;height:4.4px;border:1px solid #3a3a3a;border-bottom:none;border-radius:2.3px 2.3px 0 0;"></div>
<div style="position:absolute;left:985.2px;top:514.2px;width:0.9px;height:2.2px;background:#111;"></div>
<svg style="left:0;top:0" width="1023" height="563" viewBox="0 0 1023 563">
<rect x="31.9" y="37.2" width="0.9" height="0.9" fill="#8a8a8a"/>
<rect x="31.9" y="40.2" width="0.9" height="0.9" fill="#8a8a8a"/>
<rect x="31.9" y="43.2" width="0.9" height="0.9" fill="#8a8a8a"/>
<rect x="31.9" y="46.2" width="0.9" height="0.9" fill="#8a8a8a"/>
<line x1="77.3" y1="34.5" x2="77.3" y2="51.5" stroke="#b8b8b8" stroke-width="0.6" stroke-dasharray="1 1"/>
<line x1="264.5" y1="34.5" x2="264.5" y2="51.5" stroke="#b8b8b8" stroke-width="0.6" stroke-dasharray="1 1"/>
<rect x="53.2" y="38.5" width="1.6" height="5.6" fill="#7a7a7a"/><circle cx="54" cy="37.2" r="1.3" fill="#8a8a8a"/><rect x="52.8" y="36.3" width="2.4" height="0.5" fill="#9a9a9a"/>
<rect x="94.9" y="35.8" width="8.2" height="7.9" fill="#1a2a4a"/><rect x="95.3" y="36.2" width="7.4" height="3.2" fill="#2f78c8"/><path d="M95.3,41.6 L97.2,40.6 L99,41.8 L100.8,40.6 L102.7,41.6" stroke="#e8901a" stroke-width="0.7" fill="none"/><rect x="95.3" y="36.2" width="7.4" height="0.8" fill="#5aa0e8"/>
<rect x="135" y="35.8" width="8.1" height="7.9" fill="#0a0a0a"/><path d="M135.5,43.5 L135.5,41.5 L137.2,41 L138.5,39.5 L139.6,40.5 L140.6,37.5 L141.5,40.2 L142.6,40.8 L142.6,43.5 Z" fill="#2a9a2a"/>
<rect x="168" y="35.8" width="8.2" height="7.9" fill="#050510"/><path d="M168.5,39.3 L170.5,38 L172.5,39.6 L174.5,37.8 L176,38.5" stroke="#3a6ae0" stroke-width="0.8" fill="none"/><path d="M168.5,42 L170.5,40.8 L172.5,41.8 L174.5,40.5 L176,41.2" stroke="#d02020" stroke-width="0.8" fill="none"/>
<rect x="200.2" y="35.8" width="7" height="7.9" fill="#d8d8e8"/><rect x="200.6" y="36.3" width="2.8" height="2.2" fill="#6a9ae0"/><rect x="203.6" y="36.3" width="2.8" height="2.2" fill="#e0a0a0"/><rect x="200.6" y="38.8" width="2.8" height="2.2" fill="#e8c040"/><rect x="200.6" y="41.2" width="2.8" height="2.2" fill="#80c060"/><circle cx="206.2" cy="42.3" r="2" fill="#e02020"/><circle cx="206.2" cy="42.3" r="0.7" fill="#fff"/>
<rect x="238.3" y="35.8" width="8.2" height="7.9" fill="#fafafa"/><circle cx="239.6" cy="37.2" r="0.8" fill="#30b030"/><circle cx="239.6" cy="39.8" r="0.8" fill="#e8d020"/><circle cx="239.6" cy="42.3" r="0.8" fill="#e02020"/><line x1="241" y1="37.2" x2="246" y2="37.2" stroke="#aaa" stroke-width="0.5"/><line x1="241" y1="39.8" x2="246" y2="39.8" stroke="#aaa" stroke-width="0.5"/><line x1="241" y1="42.3" x2="246" y2="42.3" stroke="#aaa" stroke-width="0.5"/>
<rect x="278.2" y="35.8" width="6.4" height="7.9" fill="#f4f4f4" stroke="#888" stroke-width="0.6"/><line x1="278.6" y1="36.2" x2="278.6" y2="43.4" stroke="#6a8ae0" stroke-width="0.7"/>
<path d="M317.2,36 L321.3,43.5 L313.1,43.5 Z" fill="none" stroke="#333" stroke-width="0.8"/><line x1="317.2" y1="38.5" x2="317.2" y2="41.2" stroke="#333" stroke-width="0.8"/><circle cx="317.2" cy="42.4" r="0.45" fill="#333"/>
<circle cx="355.5" cy="39.8" r="3.8" fill="none" stroke="#333" stroke-width="0.8"/><line x1="355.5" y1="37.5" x2="355.5" y2="40.5" stroke="#333" stroke-width="1"/><circle cx="355.5" cy="41.9" r="0.55" fill="#333"/>
<rect x="184.0" y="236.6" width="6" height="4.6" rx="0.5" fill="#111"/><rect x="186.5" y="238" width="1" height="1.8" fill="#eee"/>
<path d="M183.20000000000002,236.8 L183.20000000000002,235.4 A2.1,2.1 0 0 1 187.4,235.4 L187.4,236.6" stroke="#111" stroke-width="1.1" fill="none"/>
<rect x="196.0" y="236.6" width="6" height="4.6" rx="0.5" fill="#111"/><rect x="198.5" y="238" width="1" height="1.8" fill="#eee"/>
<path d="M197.0,236.8 L197.0,235.2 A2,2 0 0 1 201.0,235.2 L201.0,236.8" stroke="#111" stroke-width="1.1" fill="none"/>
<rect x="207.79999999999998" y="236.6" width="6" height="4.6" rx="0.5" fill="#111"/><rect x="210.29999999999998" y="238" width="1" height="1.8" fill="#eee"/>
<path d="M208.79999999999998,236.8 L208.79999999999998,235.2 A2,2 0 0 1 212.79999999999998,235.2 L212.79999999999998,236.8" stroke="#111" stroke-width="1.1" fill="none"/>
<circle cx="213.89999999999998" cy="235" r="2.2" fill="#3cc050"/><path d="M212.79999999999998,235 L213.6,235.9 L215.0,234.2" stroke="#fff" stroke-width="0.6" fill="none"/>
<line x1="217.8" y1="230.8" x2="217.8" y2="244.5" stroke="#cfcfcf" stroke-width="0.7"/>
<line x1="251.7" y1="230.8" x2="251.7" y2="244.5" stroke="#cfcfcf" stroke-width="0.7"/>
<line x1="290.6" y1="230.8" x2="290.6" y2="244.5" stroke="#cfcfcf" stroke-width="0.7"/>
<line x1="316.6" y1="230.8" x2="316.6" y2="244.5" stroke="#cfcfcf" stroke-width="0.7"/>
<line x1="330.6" y1="230.8" x2="330.6" y2="244.5" stroke="#cfcfcf" stroke-width="0.7"/>
<line x1="344.5" y1="230.8" x2="344.5" y2="244.5" stroke="#cfcfcf" stroke-width="0.7"/>
<rect x="223" y="233.3" width="0.9" height="0.9" fill="#111"/><rect x="225" y="233.3" width="6.6" height="1.6" rx="0.5" fill="#111"/><rect x="226.2" y="236.4" width="5.4" height="1.6" rx="0.5" fill="#111"/><rect x="226.2" y="239.4" width="5.4" height="1.6" rx="0.5" fill="#111"/>
<rect x="238.7" y="236.6" width="0.9" height="0.9" fill="#111"/><rect x="240.3" y="236.4" width="7.6" height="1.5" rx="0.5" fill="#111"/>
<path d="M255,234.5 L257.5,234.5 L258.3,235.3 L262.5,235.3 L262.5,241 L255,241 Z" fill="#111"/><path d="M255.8,237 L263.2,237 L262.3,241 L255,241 Z" fill="#222" stroke="#eee" stroke-width="0.3"/>
<rect x="266.9" y="233.3" width="8.3" height="8" rx="0.6" fill="#111"/><rect x="268.6" y="233.8" width="4.6" height="2.4" fill="#eee"/><rect x="271.6" y="234.1" width="1" height="1.6" fill="#111"/><rect x="268.2" y="238.2" width="5.8" height="2.7" fill="#e8e8e8"/>
<rect x="281" y="234.4" width="4.8" height="6.8" rx="0.8" fill="#111"/>
<text x="293.2" y="240.5" font-size="6" font-family="Liberation Sans" fill="#111">1</text><rect x="296.4" y="233.3" width="5.6" height="1.4" fill="#111"/><rect x="296.4" y="235.6" width="5.6" height="1.4" fill="#111"/><rect x="296.4" y="237.9" width="5.6" height="1.4" fill="#111"/><rect x="296.4" y="240.2" width="5.6" height="1.4" fill="#111"/>
<path d="M309.5,233.6 L309.5,237.6 M307.5,236 L309.5,238.2 L311.5,236" stroke="#111" stroke-width="1.2" fill="none"/><rect x="306.9" y="239.6" width="5.3" height="1.2" fill="#111"/>
<rect x="320.2" y="232.8" width="6.8" height="8" fill="#dcdcdc"/><rect x="322.8" y="234" width="3.4" height="1.2" fill="#888"/><rect x="322.8" y="236.4" width="3.4" height="1.2" fill="#888"/><rect x="322.8" y="238.8" width="3.4" height="1.2" fill="#888"/><rect x="321" y="234" width="1" height="1" fill="#aaa"/><rect x="321" y="236.4" width="1" height="1" fill="#aaa"/><rect x="321" y="238.8" width="1" height="1" fill="#aaa"/>
<rect x="333.8" y="232.8" width="7.2" height="6.4" fill="#222"/><rect x="335.3" y="234.6" width="5.2" height="0.6" fill="#777"/><rect x="335.3" y="236.6" width="5.2" height="0.6" fill="#777"/><rect x="335" y="233.2" width="0.5" height="5.8" fill="#777"/><circle cx="339.3" cy="238.6" r="2.6" fill="#3cbf4a"/><path d="M338,238.7 L339,239.6 L340.6,237.7" stroke="#bff0c0" stroke-width="0.6" fill="none"/>
<polygon points="208.12,95.03 208.08,93.90 209.92,93.90 209.88,95.03 211.13,95.75 212.09,95.16 213.01,96.74 212.01,97.28 212.01,98.72 213.01,99.26 212.09,100.84 211.13,100.25 209.88,100.97 209.92,102.10 208.08,102.10 208.12,100.97 206.87,100.25 205.91,100.84 204.99,99.26 205.99,98.72 205.99,97.28 204.99,96.74 205.91,95.16 206.87,95.75" fill="#111" stroke="#111" stroke-width="0.5" stroke-linejoin="round"/><circle cx="209" cy="98" r="1.2" fill="#ececec"/>
<polygon points="351.26,234.17 351.12,233.18 352.68,233.18 352.54,234.17 353.52,234.57 354.12,233.77 355.23,234.88 354.43,235.48 354.83,236.46 355.82,236.32 355.82,237.88 354.83,237.74 354.43,238.72 355.23,239.32 354.12,240.43 353.52,239.63 352.54,240.03 352.68,241.02 351.12,241.02 351.26,240.03 350.28,239.63 349.68,240.43 348.57,239.32 349.37,238.72 348.97,237.74 347.98,237.88 347.98,236.32 348.97,236.46 349.37,235.48 348.57,234.88 349.68,233.77 350.28,234.57" fill="#333" stroke="#333" stroke-width="0.5" stroke-linejoin="round"/><circle cx="351.9" cy="237.1" r="1.3" fill="#ececec"/>
<rect x="194.1" y="111.0" width="5" height="1.6" rx="0.5" fill="#111"/><rect x="192" y="111.39999999999999" width="0.8" height="0.8" fill="#bbb"/>
<rect x="209.1" y="111.0" width="4.9" height="1.6" rx="0.5" fill="#111"/><rect x="206.2" y="111.0" width="1.6" height="1.6" fill="#333"/>
<rect x="194.1" y="114.0" width="5" height="1.6" rx="0.5" fill="#111"/><rect x="192" y="114.39999999999999" width="0.8" height="0.8" fill="#bbb"/>
<rect x="209.1" y="114.0" width="4.9" height="1.6" rx="0.5" fill="#111"/><rect x="206.2" y="114.0" width="1.6" height="1.6" fill="#333"/>
<rect x="194.1" y="117.10000000000001" width="5" height="1.6" rx="0.5" fill="#111"/><rect x="192" y="117.5" width="0.8" height="0.8" fill="#bbb"/>
<rect x="209.1" y="117.10000000000001" width="4.9" height="1.6" rx="0.5" fill="#111"/><rect x="206.2" y="117.10000000000001" width="1.6" height="1.6" fill="#333"/>
<g transform="translate(743.6,234.5)"><path d="M-2.5,-2.8 L2.5,2.8 M2.5,-2.8 L-2.5,2.8" stroke="#111" stroke-width="1.3"/><circle cx="-2" cy="-2" r="1.3" fill="#222"/><circle cx="2" cy="2" r="1.3" fill="#222"/></g>
<g transform="translate(823.8,234.5)"><line x1="-3.5" y1="0" x2="3.5" y2="0" stroke="#444" stroke-width="0.6"/><path d="M-2,0.8 L-1,-2.5 L0,1 L1,-1.5 L2,0.8" stroke="#d03030" stroke-width="0.8" fill="none"/></g>
<g transform="translate(883.5,234.4)"><circle r="2" fill="none" stroke="#111" stroke-width="1.5"/><rect x="-0.8" y="-3.3" width="1.6" height="1.6" fill="#111" transform="rotate(0)"/><rect x="-0.8" y="-3.3" width="1.6" height="1.6" fill="#111" transform="rotate(45)"/><rect x="-0.8" y="-3.3" width="1.6" height="1.6" fill="#111" transform="rotate(90)"/><rect x="-0.8" y="-3.3" width="1.6" height="1.6" fill="#111" transform="rotate(135)"/><rect x="-0.8" y="-3.3" width="1.6" height="1.6" fill="#111" transform="rotate(180)"/><rect x="-0.8" y="-3.3" width="1.6" height="1.6" fill="#111" transform="rotate(225)"/><rect x="-0.8" y="-3.3" width="1.6" height="1.6" fill="#111" transform="rotate(270)"/><rect x="-0.8" y="-3.3" width="1.6" height="1.6" fill="#111" transform="rotate(315)"/></g>
</svg>
<div class="t" style="left:-46.00px;width:200px;text-align:center;top:44.62px;font-size:4.96px;line-height:5.95px;color:#2a2a2a;">Add new device</div>
<div class="t" style="left:-0.80px;width:200px;text-align:center;top:44.62px;font-size:4.96px;line-height:5.95px;color:#2a2a2a;">ShowLink Plot</div>
<div class="t" style="left:38.70px;width:200px;text-align:center;top:44.62px;font-size:4.96px;line-height:5.95px;color:#2a2a2a;">Frequency Plot</div>
<div class="t" style="left:72.00px;width:200px;text-align:center;top:44.62px;font-size:4.96px;line-height:5.95px;color:#2a2a2a;">Timeline</div>
<div class="t" style="left:104.00px;width:200px;text-align:center;top:44.62px;font-size:4.96px;line-height:5.95px;color:#2a2a2a;">Auto Timeline</div>
<div class="t" style="left:142.40px;width:200px;text-align:center;top:44.62px;font-size:4.96px;line-height:5.95px;color:#2a2a2a;">Frequency List</div>
<div class="t" style="left:181.50px;width:200px;text-align:center;top:44.62px;font-size:4.96px;line-height:5.95px;color:#2a2a2a;">Event Log</div>
<div class="t" style="left:217.00px;width:200px;text-align:center;top:44.62px;font-size:4.96px;line-height:5.95px;color:#2a2a2a;">Hardware Alerts</div>
<div class="t" style="left:255.40px;width:200px;text-align:center;top:44.62px;font-size:4.96px;line-height:5.95px;color:#2a2a2a;">Interference</div>
</div></body></html>
